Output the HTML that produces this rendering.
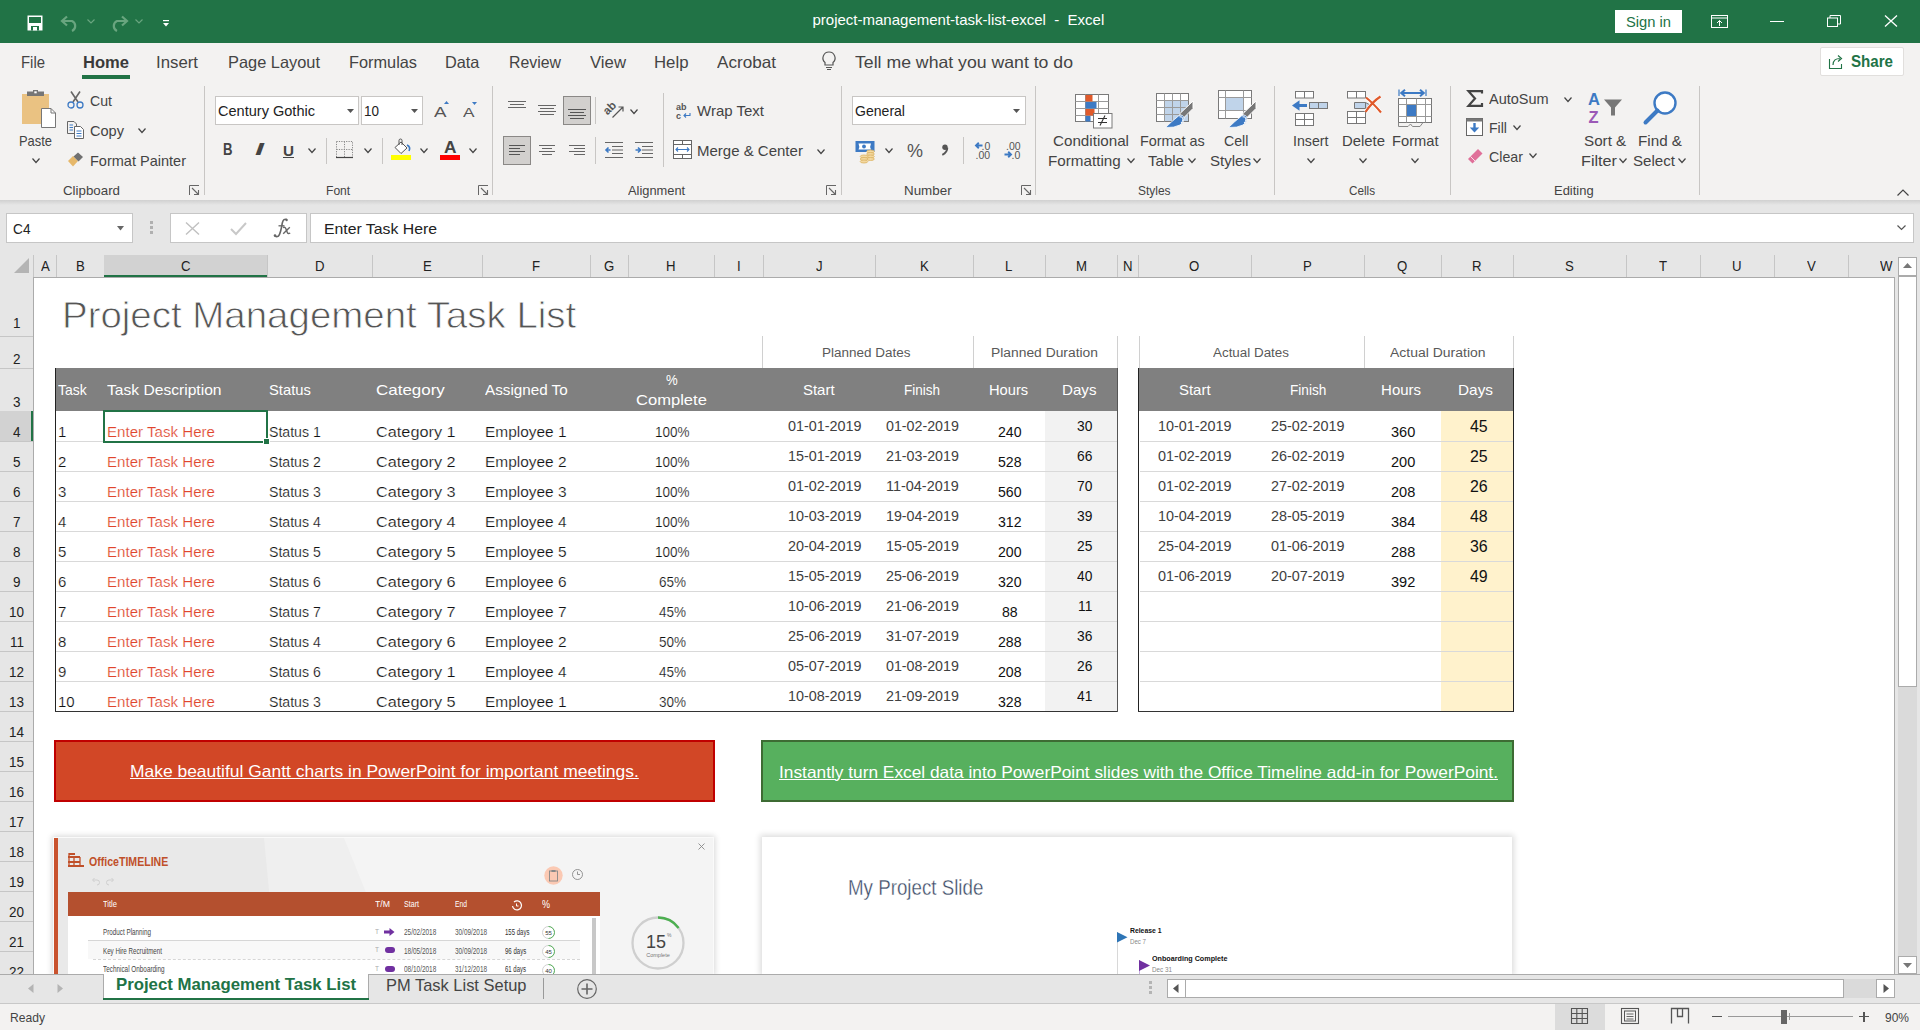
<!DOCTYPE html><html><head><meta charset="utf-8"><style>
html,body{margin:0;padding:0;}
body{width:1920px;height:1030px;position:relative;overflow:hidden;background:#fff;font-family:"Liberation Sans",sans-serif;}
.t{position:absolute;line-height:1;white-space:nowrap;transform-origin:0 0;}
svg{overflow:visible}
</style></head><body>
<div style="position:absolute;left:0px;top:0px;width:1920px;height:43px;background:#217346"></div>
<svg style="position:absolute;left:27px;top:15px;" width="16" height="16" viewBox="0 0 16 16"><path d="M0.5 0.5 H15.5 V15.5 H0.5 Z" fill="#fff"/><rect x="2" y="2" width="12" height="6" fill="#217346"/><rect x="4" y="11" width="8" height="4.5" fill="#217346"/><rect x="6" y="12" width="4" height="3.5" fill="#fff"/></svg>
<svg style="position:absolute;left:61px;top:16px;" width="19" height="15" viewBox="0 0 19 15"><path d="M2 5 H11 A5.5 5.5 0 0 1 11 15" fill="none" stroke="#69a57f" stroke-width="2.2"/><path d="M6 0.5 L1 5 L6 9.5" fill="none" stroke="#69a57f" stroke-width="2.2"/></svg>
<svg style="position:absolute;left:87px;top:19px;" width="8" height="5" viewBox="0 0 8 5"><path d="M0.5 0.5 L4.0 4 L7.5 0.5" fill="none" stroke="#69a57f" stroke-width="1.2"/></svg>
<svg style="position:absolute;left:109px;top:16px;" width="19" height="15" viewBox="0 0 19 15"><path d="M17 5 H8 A5.5 5.5 0 0 0 8 15" fill="none" stroke="#69a57f" stroke-width="2.2"/><path d="M13 0.5 L18 5 L13 9.5" fill="none" stroke="#69a57f" stroke-width="2.2"/></svg>
<svg style="position:absolute;left:135px;top:19px;" width="8" height="5" viewBox="0 0 8 5"><path d="M0.5 0.5 L4.0 4 L7.5 0.5" fill="none" stroke="#69a57f" stroke-width="1.2"/></svg>
<svg style="position:absolute;left:163px;top:20px;" width="6" height="7" viewBox="0 0 6 7"><rect x="0" y="0" width="6" height="1.2" fill="#fff"/><path d="M0 3 H6 L3 6.5 Z" fill="#fff"/></svg>
<div class="t" style="left:812.50px;top:12.30px;font-size:15px;color:#ffffff;white-space:pre;">project-management-task-list-excel  -  Excel</div>
<div style="position:absolute;left:1615px;top:10px;width:67px;height:23px;background:#fff;"></div>
<div class="t" style="left:1626.00px;top:14.30px;font-size:15px;color:#217346;transform:scaleX(0.9811);">Sign in</div>
<svg style="position:absolute;left:1711px;top:15px;" width="17" height="13" viewBox="0 0 17 13"><rect x="0.5" y="0.5" width="16" height="12" fill="none" stroke="#fff" stroke-width="1"/><path d="M0.5 3 H16.5" stroke="#fff"/><path d="M8.5 11 V5.5 M6 8 L8.5 5.5 L11 8" fill="none" stroke="#fff" stroke-width="1"/></svg>
<div style="position:absolute;left:1770px;top:21px;width:14px;height:1.2px;background:#fff"></div>
<svg style="position:absolute;left:1827px;top:15px;" width="14" height="12" viewBox="0 0 14 12"><rect x="0.5" y="3" width="10" height="8.5" fill="none" stroke="#fff"/><path d="M3 3 V0.5 H13.5 V9 H10.5" fill="none" stroke="#fff"/></svg>
<svg style="position:absolute;left:1884px;top:15px;" width="14" height="12" viewBox="0 0 14 12"><path d="M1 0.5 L13 11.5 M13 0.5 L1 11.5" stroke="#fff" stroke-width="1.3"/></svg>
<div style="position:absolute;left:0px;top:43px;width:1920px;height:157px;background:#f3f2f1"></div>
<div class="t" style="left:21.00px;top:54.33px;font-size:16.5px;color:#444;transform:scaleX(0.9027);">File</div>
<div class="t" style="left:156.00px;top:54.33px;font-size:16.5px;color:#444;transform:scaleX(1.0178);">Insert</div>
<div class="t" style="left:227.50px;top:54.33px;font-size:16.5px;color:#444;transform:scaleX(0.9929);">Page Layout</div>
<div class="t" style="left:348.50px;top:54.33px;font-size:16.5px;color:#444;transform:scaleX(0.9889);">Formulas</div>
<div class="t" style="left:445.40px;top:54.33px;font-size:16.5px;color:#444;transform:scaleX(0.9870);">Data</div>
<div class="t" style="left:509.00px;top:54.33px;font-size:16.5px;color:#444;transform:scaleX(0.9611);">Review</div>
<div class="t" style="left:590.00px;top:54.33px;font-size:16.5px;color:#444;transform:scaleX(1.0150);">View</div>
<div class="t" style="left:654.00px;top:54.33px;font-size:16.5px;color:#444;transform:scaleX(1.0166);">Help</div>
<div class="t" style="left:717.00px;top:54.33px;font-size:16.5px;color:#444;transform:scaleX(1.0375);">Acrobat</div>
<div class="t" style="left:82.50px;top:54.33px;font-size:16.5px;color:#3a3a3a;font-weight:bold;transform:scaleX(1.0034);">Home</div>
<div style="position:absolute;left:82px;top:75px;width:48px;height:3.5px;background:#217346"></div>
<svg style="position:absolute;left:821px;top:51px;" width="16" height="19" viewBox="0 0 16 19"><path d="M8 1 A6 6 0 0 0 4 11.5 V14 H12 V11.5 A6 6 0 0 0 8 1 Z" fill="none" stroke="#555" stroke-width="1.2"/><path d="M5 16.5 H11 M6 18.5 H10" stroke="#555" stroke-width="1.2"/></svg>
<div class="t" style="left:855.00px;top:54.33px;font-size:16.5px;color:#444;transform:scaleX(1.0707);">Tell me what you want to do</div>
<div style="position:absolute;left:1820px;top:47px;width:84px;height:29px;background:#fff;border:1px solid #e1dfdd;box-sizing:border-box;border-radius:2px"></div>
<svg style="position:absolute;left:1829px;top:54px;" width="15" height="15" viewBox="0 0 15 15"><path d="M0.5 5 V14.5 H12.5 V10" fill="none" stroke="#217346" stroke-width="1.1"/><path d="M4 11 C4 6 7 4.5 11 4.5 M9 1.5 L12.5 4.5 L9 7.5" fill="none" stroke="#217346" stroke-width="1.2"/></svg>
<div class="t" style="left:1850.50px;top:54.46px;font-size:16px;color:#217346;font-weight:bold;transform:scaleX(0.9445);">Share</div>
<div style="position:absolute;left:204px;top:86px;width:1px;height:109px;background:#c8c6c4"></div>
<div style="position:absolute;left:492px;top:86px;width:1px;height:109px;background:#c8c6c4"></div>
<div style="position:absolute;left:841px;top:86px;width:1px;height:109px;background:#c8c6c4"></div>
<div style="position:absolute;left:1035px;top:86px;width:1px;height:109px;background:#c8c6c4"></div>
<div style="position:absolute;left:1274px;top:86px;width:1px;height:109px;background:#c8c6c4"></div>
<div style="position:absolute;left:1450px;top:86px;width:1px;height:109px;background:#c8c6c4"></div>
<div style="position:absolute;left:1699px;top:86px;width:1px;height:109px;background:#c8c6c4"></div>
<div class="t" style="left:62.50px;top:183.60px;font-size:13px;color:#444;transform:scaleX(1.0243);">Clipboard</div>
<div class="t" style="left:325.80px;top:183.60px;font-size:13px;color:#444;transform:scaleX(0.9303);">Font</div>
<div class="t" style="left:627.80px;top:183.60px;font-size:13px;color:#444;transform:scaleX(0.9894);">Alignment</div>
<div class="t" style="left:904.00px;top:183.60px;font-size:13px;color:#444;transform:scaleX(1.0294);">Number</div>
<div class="t" style="left:1138.00px;top:183.60px;font-size:13px;color:#444;transform:scaleX(0.9180);">Styles</div>
<div class="t" style="left:1348.60px;top:183.60px;font-size:13px;color:#444;transform:scaleX(0.9033);">Cells</div>
<div class="t" style="left:1554.00px;top:183.60px;font-size:13px;color:#444;transform:scaleX(0.9962);">Editing</div>
<svg style="position:absolute;left:189px;top:185px;" width="11" height="11" viewBox="0 0 11 11"><path d="M0.5 10 V0.5 H10" fill="none" stroke="#666" stroke-width="1"/><path d="M3 3 L9.5 9.5 M5 9.5 H9.5 V5" fill="none" stroke="#666" stroke-width="1.1"/></svg>
<svg style="position:absolute;left:478px;top:185px;" width="11" height="11" viewBox="0 0 11 11"><path d="M0.5 10 V0.5 H10" fill="none" stroke="#666" stroke-width="1"/><path d="M3 3 L9.5 9.5 M5 9.5 H9.5 V5" fill="none" stroke="#666" stroke-width="1.1"/></svg>
<svg style="position:absolute;left:826px;top:185px;" width="11" height="11" viewBox="0 0 11 11"><path d="M0.5 10 V0.5 H10" fill="none" stroke="#666" stroke-width="1"/><path d="M3 3 L9.5 9.5 M5 9.5 H9.5 V5" fill="none" stroke="#666" stroke-width="1.1"/></svg>
<svg style="position:absolute;left:1021px;top:185px;" width="11" height="11" viewBox="0 0 11 11"><path d="M0.5 10 V0.5 H10" fill="none" stroke="#666" stroke-width="1"/><path d="M3 3 L9.5 9.5 M5 9.5 H9.5 V5" fill="none" stroke="#666" stroke-width="1.1"/></svg>
<svg style="position:absolute;left:22px;top:90px;" width="35" height="38" viewBox="0 0 35 38"><rect x="0" y="4" width="27" height="30" fill="#eac282"/><path d="M5 1.5 H22 V6 H5 Z" fill="#767676"/><rect x="11" y="0" width="5" height="4" fill="#767676"/><rect x="12.3" y="1.3" width="2.4" height="2" fill="#fff"/><path d="M19.5 18.5 H29 L33.5 23 V37.5 H19.5 Z" fill="#fff" stroke="#777" stroke-width="1"/><path d="M29 18.5 V23 H33.5" fill="none" stroke="#777" stroke-width="1"/></svg>
<div class="t" style="left:19.40px;top:132.90px;font-size:15px;color:#444;transform:scaleX(0.8603);">Paste</div>
<svg style="position:absolute;left:32px;top:157.5px;" width="8" height="5.5" viewBox="0 0 8 5.5"><path d="M0.5 0.5 L4.0 4.5 L7.5 0.5" fill="none" stroke="#444" stroke-width="1.2"/></svg>
<svg style="position:absolute;left:67px;top:91px;" width="17" height="18" viewBox="0 0 17 18"><path d="M4 0.5 L11 11 M13 0.5 L6 11" stroke="#666" stroke-width="1.6"/><circle cx="4" cy="14" r="3" fill="none" stroke="#3d7ac4" stroke-width="1.3"/><circle cx="13" cy="14" r="3" fill="none" stroke="#3d7ac4" stroke-width="1.3"/></svg>
<div class="t" style="left:90.00px;top:93.30px;font-size:15px;color:#444;transform:scaleX(0.9425);">Cut</div>
<svg style="position:absolute;left:67px;top:121px;" width="17" height="18" viewBox="0 0 17 18"><path d="M0.5 0.5 H7 L9.5 3 V7 M0.5 0.5 V12.5 H7" fill="none" stroke="#666" stroke-width="1"/><path d="M7.5 5.5 H13.5 L16.5 8.5 V17.5 H7.5 Z" fill="#fff" stroke="#666" stroke-width="1"/><path d="M2.5 4 H6 M2.5 6.5 H6 M2.5 9 H6 M9.5 10 H14.5 M9.5 12.5 H14.5 M9.5 15 H14.5" stroke="#3d7ac4" stroke-width="1"/></svg>
<div class="t" style="left:90.00px;top:122.90px;font-size:15px;color:#444;transform:scaleX(0.9709);">Copy</div>
<svg style="position:absolute;left:137.5px;top:128px;" width="8" height="5.5" viewBox="0 0 8 5.5"><path d="M0.5 0.5 L4.0 4.5 L7.5 0.5" fill="none" stroke="#444" stroke-width="1.2"/></svg>
<svg style="position:absolute;left:67px;top:152px;" width="17" height="15" viewBox="0 0 17 15"><path d="M1 9 L6 4 L11 9 L6 14.5 Z" fill="#e6b86a"/><path d="M6.5 4.5 L11 0.5 L16 5 L11.5 9.5 Z" fill="#707070"/></svg>
<div class="t" style="left:90.00px;top:153.30px;font-size:15px;color:#444;transform:scaleX(0.9677);">Format Painter</div>
<div style="position:absolute;left:215px;top:96px;width:144px;height:29px;background:#fff;border:1px solid #c8c6c4;box-sizing:border-box"></div>
<div class="t" style="left:218.00px;top:103.30px;font-size:15px;color:#222;transform:scaleX(0.9696);">Century Gothic</div>
<svg style="position:absolute;left:347px;top:109px;" width="7" height="4" viewBox="0 0 7 4"><path d="M0 0 H7 L3.5 4 Z" fill="#555"/></svg>
<div style="position:absolute;left:361px;top:96px;width:62px;height:29px;background:#fff;border:1px solid #c8c6c4;box-sizing:border-box"></div>
<div class="t" style="left:364.00px;top:103.30px;font-size:15px;color:#222;transform:scaleX(0.8990);">10</div>
<svg style="position:absolute;left:411px;top:109px;" width="7" height="4" viewBox="0 0 7 4"><path d="M0 0 H7 L3.5 4 Z" fill="#555"/></svg>
<div class="t" style="left:434.00px;top:104.30px;font-size:15px;color:#555;transform:scaleX(1.2493);">A</div>
<svg style="position:absolute;left:444px;top:101px;" width="5" height="3" viewBox="0 0 5 3"><path d="M0 3 L2.5 0 L5 3 Z" fill="#3d7ac4"/></svg>
<div class="t" style="left:463.00px;top:105.57px;font-size:13.5px;color:#555;transform:scaleX(1.2771);">A</div>
<svg style="position:absolute;left:472px;top:102px;" width="5" height="3" viewBox="0 0 5 3"><path d="M0 0 L2.5 3 L5 0 Z" fill="#3d7ac4"/></svg>
<div class="t" style="left:223.40px;top:142.46px;font-size:16px;color:#444;font-weight:bold;transform:scaleX(0.8222);">B</div>
<div class="t" style="left:255.00px;top:142.46px;font-size:16px;color:#444;font-weight:bold;transform:scaleX(2.0247);font-style:italic;">I</div>
<div class="t" style="left:283.00px;top:143.30px;font-size:15px;color:#444;font-weight:bold;transform:scaleX(1.0154);">U</div>
<div style="position:absolute;left:283px;top:157px;width:11px;height:1.2px;background:#444"></div>
<svg style="position:absolute;left:307.8px;top:148px;" width="8" height="5.5" viewBox="0 0 8 5.5"><path d="M0.5 0.5 L4.0 4.5 L7.5 0.5" fill="none" stroke="#444" stroke-width="1.2"/></svg>
<div style="position:absolute;left:326px;top:138px;width:1px;height:26px;background:#c8c6c4"></div>
<svg style="position:absolute;left:336px;top:141px;" width="17" height="17" viewBox="0 0 17 17"><path d="M0.5 0.5 H16.5 V16.5 M0.5 0.5 V16.5 M8.5 0.5 V16.5 M0.5 8.5 H16.5" fill="none" stroke="#888" stroke-width="1" stroke-dasharray="1.2 1.2"/><path d="M0 16.5 H17" stroke="#444" stroke-width="1.2"/></svg>
<svg style="position:absolute;left:364px;top:148px;" width="8" height="5.5" viewBox="0 0 8 5.5"><path d="M0.5 0.5 L4.0 4.5 L7.5 0.5" fill="none" stroke="#444" stroke-width="1.2"/></svg>
<div style="position:absolute;left:382px;top:138px;width:1px;height:26px;background:#c8c6c4"></div>
<svg style="position:absolute;left:391px;top:140px;" width="21" height="20" viewBox="0 0 21 20"><path d="M4 7.5 L10 2 L16 8 L10 13.5 Z" fill="#fff" stroke="#555" stroke-width="1"/><path d="M8 5 V0.5 A1.5 1.5 0 0 1 11 0.5 V5" fill="none" stroke="#555" stroke-width="1"/><path d="M16 5 Q20 7 18 11" fill="none" stroke="#3d7ac4" stroke-width="1.6"/><rect x="0" y="15" width="20" height="5" fill="#ffff00"/></svg>
<svg style="position:absolute;left:420px;top:148px;" width="8" height="5.5" viewBox="0 0 8 5.5"><path d="M0.5 0.5 L4.0 4.5 L7.5 0.5" fill="none" stroke="#444" stroke-width="1.2"/></svg>
<div class="t" style="left:443.50px;top:139.11px;font-size:17px;color:#444;font-weight:bold;transform:scaleX(1.0181);">A</div>
<div style="position:absolute;left:440px;top:155px;width:20px;height:5px;background:#ff0000"></div>
<svg style="position:absolute;left:468.75px;top:148px;" width="8" height="5.5" viewBox="0 0 8 5.5"><path d="M0.5 0.5 L4.0 4.5 L7.5 0.5" fill="none" stroke="#444" stroke-width="1.2"/></svg>
<svg style="position:absolute;left:508px;top:100px;" width="18" height="9" viewBox="0 0 18 9"><path d="M0 1.5 H18 M2 4.5 H16 M0 7.5 H18" stroke="#666" stroke-width="1"/></svg>
<svg style="position:absolute;left:538px;top:104px;" width="18" height="12" viewBox="0 0 18 12"><path d="M0 1.5 H18 M2 4.5 H16 M0 7.5 H18 M2 10.5 H16" stroke="#666" stroke-width="1"/></svg>
<div style="position:absolute;left:563px;top:96px;width:28px;height:29px;background:#d2d0ce;border:1px solid #8a8886;box-sizing:border-box"></div>
<svg style="position:absolute;left:568px;top:108px;" width="18" height="12" viewBox="0 0 18 12"><path d="M0 1.5 H18 M2 4.5 H16 M0 7.5 H18 M2 10.5 H16" stroke="#555" stroke-width="1"/></svg>
<div style="position:absolute;left:595px;top:97px;width:1px;height:27px;background:#c8c6c4"></div>
<svg style="position:absolute;left:604px;top:100px;" width="20" height="19" viewBox="0 0 20 19"><text x="0" y="0" font-size="11.5" fill="#555" font-weight="bold" font-family="Liberation Sans" transform="translate(3.5 15.5) rotate(-45)">ab</text><path d="M8.5 17.5 L18.5 7.5 M14.5 7 H19 V11.5" fill="none" stroke="#555" stroke-width="1.2"/></svg>
<svg style="position:absolute;left:629.7px;top:109px;" width="8" height="5.5" viewBox="0 0 8 5.5"><path d="M0.5 0.5 L4.0 4.5 L7.5 0.5" fill="none" stroke="#444" stroke-width="1.2"/></svg>
<div style="position:absolute;left:663px;top:93px;width:1px;height:74px;background:#c8c6c4"></div>
<svg style="position:absolute;left:676px;top:102px;" width="16" height="17" viewBox="0 0 16 17"><text x="0" y="7.5" font-size="9" fill="#555" font-family="Liberation Sans" font-weight="bold">ab</text><text x="0" y="16.5" font-size="9" fill="#555" font-family="Liberation Sans" font-weight="bold">c</text><path d="M14 11 V13.5 H8 M10 11.5 L8 13.5 L10 15.5" fill="none" stroke="#3d7ac4" stroke-width="1.1"/></svg>
<div class="t" style="left:697.00px;top:103.30px;font-size:15px;color:#444;">Wrap Text</div>
<div style="position:absolute;left:503px;top:136px;width:28px;height:29px;background:#d2d0ce;border:1px solid #8a8886;box-sizing:border-box"></div>
<svg style="position:absolute;left:509px;top:145px;" width="16" height="11" viewBox="0 0 16 11"><path d="M0 0.5 H16 M0 3.5 H11 M0 6.5 H16 M0 9.5 H11" stroke="#555" stroke-width="1"/></svg>
<svg style="position:absolute;left:539px;top:145px;" width="16" height="11" viewBox="0 0 16 11"><path d="M0 0.5 H16 M3 3.5 H13 M0 6.5 H16 M3 9.5 H13" stroke="#666" stroke-width="1"/></svg>
<svg style="position:absolute;left:569px;top:145px;" width="16" height="11" viewBox="0 0 16 11"><path d="M0 0.5 H16 M5 3.5 H16 M0 6.5 H16 M5 9.5 H16" stroke="#666" stroke-width="1"/></svg>
<div style="position:absolute;left:595px;top:137px;width:1px;height:27px;background:#c8c6c4"></div>
<svg style="position:absolute;left:605px;top:142px;" width="18" height="16" viewBox="0 0 18 16"><path d="M0 0.5 H18 M7 4.5 H18 M7 8 H18 M7 11.5 H18 M0 15.5 H18" stroke="#666" stroke-width="1"/><path d="M5.5 8 H1 M3.5 5.5 L1 8 L3.5 10.5" fill="none" stroke="#3d7ac4" stroke-width="1.6"/></svg>
<svg style="position:absolute;left:635px;top:142px;" width="18" height="16" viewBox="0 0 18 16"><path d="M0 0.5 H18 M7 4.5 H18 M7 8 H18 M7 11.5 H18 M0 15.5 H18" stroke="#666" stroke-width="1"/><path d="M0.5 8 H5 M3 5.5 L5.5 8 L3 10.5" fill="none" stroke="#3d7ac4" stroke-width="1.6"/></svg>
<svg style="position:absolute;left:673px;top:140px;" width="19" height="19" viewBox="0 0 19 19"><rect x="0.5" y="0.5" width="18" height="18" fill="#fff" stroke="#666"/><path d="M0.5 4.5 H18.5 M0.5 14.5 H18.5 M9.5 0.5 V4.5 M9.5 14.5 V18.5" stroke="#666"/><path d="M3 9.5 H16 M5 7.5 L3 9.5 L5 11.5 M14 7.5 L16 9.5 L14 11.5" fill="none" stroke="#3d7ac4" stroke-width="1.1"/></svg>
<div class="t" style="left:697.00px;top:143.30px;font-size:15px;color:#444;">Merge &amp; Center</div>
<svg style="position:absolute;left:817px;top:148.5px;" width="8" height="5.5" viewBox="0 0 8 5.5"><path d="M0.5 0.5 L4.0 4.5 L7.5 0.5" fill="none" stroke="#444" stroke-width="1.2"/></svg>
<div style="position:absolute;left:852px;top:96px;width:174px;height:29px;background:#fff;border:1px solid #c8c6c4;box-sizing:border-box"></div>
<div class="t" style="left:855.00px;top:103.30px;font-size:15px;color:#222;transform:scaleX(0.9369);">General</div>
<svg style="position:absolute;left:1013px;top:109px;" width="7" height="4" viewBox="0 0 7 4"><path d="M0 0 H7 L3.5 4 Z" fill="#555"/></svg>
<svg style="position:absolute;left:855px;top:141px;" width="21" height="22" viewBox="0 0 21 22"><rect x="0.5" y="0" width="19" height="11" fill="#3d7ac4"/><path d="M3.5 2.5 H16 Q14.5 5.5 16 8.5 H3.5 Q5 5.5 3.5 2.5 Z" fill="#fff"/><circle cx="9" cy="5.5" r="1.9" fill="#3d7ac4"/><ellipse cx="15.5" cy="10.5" rx="3.8" ry="1.5" fill="#f3d8a0" stroke="#dcb463" stroke-width="0.8"/><ellipse cx="15.5" cy="13" rx="3.8" ry="1.5" fill="#f3d8a0" stroke="#dcb463" stroke-width="0.8"/><ellipse cx="15.5" cy="15.5" rx="3.8" ry="1.5" fill="#f3d8a0" stroke="#dcb463" stroke-width="0.8"/><ellipse cx="15.5" cy="18" rx="3.8" ry="1.5" fill="#f3d8a0" stroke="#dcb463" stroke-width="0.8"/><ellipse cx="9" cy="15.5" rx="3.8" ry="1.5" fill="#f3d8a0" stroke="#dcb463" stroke-width="0.8"/><ellipse cx="9" cy="18" rx="3.8" ry="1.5" fill="#f3d8a0" stroke="#dcb463" stroke-width="0.8"/><ellipse cx="9" cy="20.5" rx="3.8" ry="1.5" fill="#f3d8a0" stroke="#dcb463" stroke-width="0.8"/></svg>
<svg style="position:absolute;left:884.7px;top:148px;" width="8" height="5.5" viewBox="0 0 8 5.5"><path d="M0.5 0.5 L4.0 4.5 L7.5 0.5" fill="none" stroke="#444" stroke-width="1.2"/></svg>
<div class="t" style="left:906.50px;top:141.42px;font-size:19px;color:#555;transform:scaleX(0.9471);">%</div>
<svg style="position:absolute;left:940px;top:144px;" width="9" height="12" viewBox="0 0 9 12"><circle cx="5" cy="3.3" r="2.7" fill="#555"/><path d="M7.3 3.8 Q7.3 8.5 2.3 10.8" fill="none" stroke="#555" stroke-width="1.9"/></svg>
<div style="position:absolute;left:963px;top:137px;width:1px;height:27px;background:#c8c6c4"></div>
<svg style="position:absolute;left:974px;top:141px;" width="17" height="18" viewBox="0 0 17 18"><path d="M8.5 4.5 H2 M4.8 1.8 L2 4.5 L4.8 7.2" fill="none" stroke="#3d7ac4" stroke-width="1.9"/><text x="7.5" y="9" font-size="10.5" fill="#555" font-family="Liberation Sans">.0</text><text x="1.5" y="17.5" font-size="10.5" fill="#555" font-family="Liberation Sans">.00</text></svg>
<svg style="position:absolute;left:1004px;top:141px;" width="17" height="18" viewBox="0 0 17 18"><text x="2" y="9" font-size="10.5" fill="#555" font-family="Liberation Sans">.00</text><path d="M0.5 13.5 H7 M4.2 10.8 L7 13.5 L4.2 16.2" fill="none" stroke="#3d7ac4" stroke-width="1.9"/><text x="7.5" y="17.5" font-size="10.5" fill="#555" font-family="Liberation Sans">.0</text></svg>
<svg style="position:absolute;left:1075px;top:94px;" width="38" height="35" viewBox="0 0 38 35"><rect x="0.5" y="0.5" width="33" height="27" fill="#fff" stroke="#7a7a7a"/><path d="M0.5 7.5 H33.5 M0.5 14.5 H33.5 M0.5 21.5 H33.5 M10.5 0.5 V27.5 M23.5 0.5 V27.5" stroke="#9a9a9a"/><rect x="10.5" y="1" width="7" height="6.5" fill="#e05a2b"/><rect x="10.5" y="8" width="11" height="6.5" fill="#3d7ac4"/><rect x="10.5" y="15" width="9" height="6.5" fill="#e05a2b"/><rect x="10.5" y="22" width="5" height="5.5" fill="#3d7ac4"/><rect x="18.5" y="19.5" width="18.5" height="14.5" fill="#fff" stroke="#7a7a7a"/><path d="M23 24.5 H32 M23 28.5 H32 M30 21.5 L25 31.5" stroke="#333" stroke-width="1.1"/></svg>
<div class="t" style="left:1053.00px;top:132.90px;font-size:15px;color:#444;transform:scaleX(1.0126);">Conditional</div>
<div class="t" style="left:1048.00px;top:152.50px;font-size:15px;color:#444;transform:scaleX(1.0141);">Formatting</div>
<svg style="position:absolute;left:1126.5px;top:157.5px;" width="8" height="5.5" viewBox="0 0 8 5.5"><path d="M0.5 0.5 L4.0 4.5 L7.5 0.5" fill="none" stroke="#444" stroke-width="1.2"/></svg>
<svg style="position:absolute;left:1156px;top:93px;" width="38" height="36" viewBox="0 0 38 36"><rect x="0.5" y="0.5" width="32" height="28" fill="#fff" stroke="#7a7a7a"/><rect x="9" y="8" width="23" height="20" fill="#c0d4ea"/><path d="M8.5 0.5 V28.5 M16.5 0.5 V28.5 M24.5 0.5 V28.5 M0.5 7.5 H32.5 M0.5 14.5 H32.5 M0.5 21.5 H32.5" stroke="#9a9a9a"/><g transform="translate(9 7)"><path d="M28 1 V8.5 L18.5 18 L14.5 14 Z" fill="#777" stroke="#fff" stroke-width="1"/><path d="M14 15.5 Q18 14 19 18 Q19.5 22 15 25 Q9 28 0.5 27.5 Q6 22 14 15.5 Z" fill="#3d7ac4" stroke="#fff" stroke-width="0.8"/><path d="M14.5 16.8 Q17.5 16 18 19 Q18 21.5 16 23" fill="none" stroke="#fff" stroke-width="1"/></g></svg>
<div class="t" style="left:1140.00px;top:132.90px;font-size:15px;color:#444;transform:scaleX(0.9598);">Format as</div>
<div class="t" style="left:1148.00px;top:152.50px;font-size:15px;color:#444;transform:scaleX(1.0039);">Table</div>
<svg style="position:absolute;left:1188px;top:157.5px;" width="8" height="5.5" viewBox="0 0 8 5.5"><path d="M0.5 0.5 L4.0 4.5 L7.5 0.5" fill="none" stroke="#444" stroke-width="1.2"/></svg>
<svg style="position:absolute;left:1218px;top:90px;" width="38" height="38" viewBox="0 0 38 38"><rect x="0.5" y="0.5" width="33" height="28" fill="#fff" stroke="#7a7a7a"/><rect x="8" y="8" width="17.5" height="12.5" fill="#c0d4ea"/><path d="M7.5 0.5 V28.5 M25.5 0.5 V28.5 M0.5 7.5 H33.5 M0.5 20.5 H33.5" stroke="#9a9a9a"/><g transform="translate(10 10)"><path d="M28 1 V8.5 L18.5 18 L14.5 14 Z" fill="#777" stroke="#fff" stroke-width="1"/><path d="M14 15.5 Q18 14 19 18 Q19.5 22 15 25 Q9 28 0.5 27.5 Q6 22 14 15.5 Z" fill="#3d7ac4" stroke="#fff" stroke-width="0.8"/><path d="M14.5 16.8 Q17.5 16 18 19 Q18 21.5 16 23" fill="none" stroke="#fff" stroke-width="1"/></g></svg>
<div class="t" style="left:1224.00px;top:132.90px;font-size:15px;color:#444;transform:scaleX(0.9442);">Cell</div>
<div class="t" style="left:1210.00px;top:152.50px;font-size:15px;color:#444;transform:scaleX(1.0037);">Styles</div>
<svg style="position:absolute;left:1253px;top:157.5px;" width="8" height="5.5" viewBox="0 0 8 5.5"><path d="M0.5 0.5 L4.0 4.5 L7.5 0.5" fill="none" stroke="#444" stroke-width="1.2"/></svg>
<svg style="position:absolute;left:1291px;top:90px;" width="38" height="37" viewBox="0 0 38 37"><rect x="4.5" y="1.5" width="18" height="6.5" fill="#fff" stroke="#777"/><path d="M13.5 1.5 V8" stroke="#777"/><rect x="18.5" y="12.5" width="18" height="6" fill="#c0d4ea" stroke="#777"/><path d="M27.5 12.5 V18.5" stroke="#777"/><path d="M16 15.5 H5" stroke="#3d7ac4" stroke-width="3"/><path d="M8.5 10.2 L1 15.5 L8.5 20.8 Z" fill="#3d7ac4"/><rect x="4.5" y="23.5" width="18" height="12" fill="#fff" stroke="#777"/><path d="M4.5 29.5 H22.5 M13.5 23.5 V35.5" stroke="#777"/></svg>
<div class="t" style="left:1293.00px;top:132.90px;font-size:15px;color:#444;transform:scaleX(0.9436);">Insert</div>
<svg style="position:absolute;left:1306.7px;top:157.5px;" width="8" height="5.5" viewBox="0 0 8 5.5"><path d="M0.5 0.5 L4.0 4.5 L7.5 0.5" fill="none" stroke="#444" stroke-width="1.2"/></svg>
<svg style="position:absolute;left:1347px;top:90px;" width="36" height="36" viewBox="0 0 36 36"><rect x="0.5" y="1.5" width="18" height="6.5" fill="#fff" stroke="#777"/><path d="M9.5 1.5 V8" stroke="#777"/><path d="M7.5 12.5 H18.5 L24 15.5 L18.5 18.5 H7.5 Z" fill="#c0d4ea" stroke="#777"/><path d="M18.5 12.5 V18.5" stroke="#777"/><rect x="0.5" y="21.5" width="18" height="12" fill="#fff" stroke="#777"/><path d="M0.5 27.5 H18.5 M9.5 21.5 V33.5" stroke="#777"/><path d="M19 7.5 Q26 13 34 22.5 M33.5 6.5 Q25 12 18.5 22" fill="none" stroke="#fff" stroke-width="3.5"/><path d="M19 7.5 Q26 13 34 22.5 M33.5 6.5 Q25 12 18.5 22" fill="none" stroke="#e05a2b" stroke-width="2.2"/></svg>
<div class="t" style="left:1341.50px;top:132.90px;font-size:15px;color:#444;transform:scaleX(0.9917);">Delete</div>
<svg style="position:absolute;left:1359px;top:157.5px;" width="8" height="5.5" viewBox="0 0 8 5.5"><path d="M0.5 0.5 L4.0 4.5 L7.5 0.5" fill="none" stroke="#444" stroke-width="1.2"/></svg>
<svg style="position:absolute;left:1398px;top:89px;" width="35" height="38" viewBox="0 0 35 38"><path d="M1 0.5 V7 M28 0.5 V7" stroke="#3d7ac4" stroke-width="1.2"/><path d="M4 4 H25" stroke="#3d7ac4" stroke-width="2"/><path d="M7 0.8 L3.2 4 L7 7.2 M22 0.8 L25.8 4 L22 7.2" fill="none" stroke="#3d7ac4" stroke-width="2"/><rect x="0.5" y="9.5" width="33" height="24" fill="#fff" stroke="#777"/><path d="M0.5 15.5 H33.5 M0.5 27.5 H33.5 M8.5 9.5 V33.5 M18.5 9.5 V33.5 M27.5 9.5 V33.5" stroke="#999"/><rect x="9" y="16" width="9" height="11" fill="#3d7ac4"/><path d="M0.5 33.5 V37.5 H10 L12.5 35 L14.5 37.5 H22 L25 33.5" fill="none" stroke="#888"/></svg>
<div class="t" style="left:1391.50px;top:132.90px;font-size:15px;color:#444;transform:scaleX(0.9788);">Format</div>
<svg style="position:absolute;left:1411px;top:157.5px;" width="8" height="5.5" viewBox="0 0 8 5.5"><path d="M0.5 0.5 L4.0 4.5 L7.5 0.5" fill="none" stroke="#444" stroke-width="1.2"/></svg>
<svg style="position:absolute;left:1467px;top:90px;" width="16" height="17" viewBox="0 0 16 17"><path d="M15 3.5 V1.2 H1.5 L8 8.5 L1.5 15.8 H15 V13" fill="none" stroke="#444" stroke-width="2.2" stroke-linejoin="miter"/></svg>
<div class="t" style="left:1489.30px;top:90.90px;font-size:15px;color:#444;transform:scaleX(0.9676);">AutoSum</div>
<svg style="position:absolute;left:1564px;top:96.5px;" width="8" height="5.5" viewBox="0 0 8 5.5"><path d="M0.5 0.5 L4.0 4.5 L7.5 0.5" fill="none" stroke="#444" stroke-width="1.2"/></svg>
<svg style="position:absolute;left:1466px;top:118px;" width="17" height="18" viewBox="0 0 17 18"><rect x="0.5" y="0.5" width="16" height="17" fill="#fff" stroke="#666"/><rect x="0.5" y="0.5" width="16" height="3" fill="#777"/><path d="M8.5 5 V12" stroke="#3d7ac4" stroke-width="2.4"/><path d="M3.8 9.5 L8.5 14.5 L13.2 9.5 Z" fill="#3d7ac4"/></svg>
<div class="t" style="left:1489.30px;top:120.00px;font-size:15px;color:#444;transform:scaleX(0.9394);">Fill</div>
<svg style="position:absolute;left:1513px;top:124.5px;" width="8" height="5.5" viewBox="0 0 8 5.5"><path d="M0.5 0.5 L4.0 4.5 L7.5 0.5" fill="none" stroke="#444" stroke-width="1.2"/></svg>
<svg style="position:absolute;left:1467px;top:148px;" width="16" height="16" viewBox="0 0 16 16"><path d="M1 11 L11 1 L15.5 5.5 L5.5 15.5 Z" fill="#e0709a"/><path d="M3.5 8.5 L8 13" stroke="#fff" stroke-width="0.8"/></svg>
<div class="t" style="left:1489.30px;top:148.70px;font-size:15px;color:#444;transform:scaleX(0.9485);">Clear</div>
<svg style="position:absolute;left:1528.5px;top:153px;" width="8" height="5.5" viewBox="0 0 8 5.5"><path d="M0.5 0.5 L4.0 4.5 L7.5 0.5" fill="none" stroke="#444" stroke-width="1.2"/></svg>
<svg style="position:absolute;left:1588px;top:92px;" width="36" height="31" viewBox="0 0 36 31"><text x="0" y="12.5" font-size="16.5" fill="#3d7ac4" font-weight="bold" font-family="Liberation Sans">A</text><text x="0.5" y="30.5" font-size="16.5" fill="#9b59b6" font-weight="bold" font-family="Liberation Sans">Z</text><path d="M16 7.5 H34 L27 15.5 V23.5 H23 V15.5 Z" fill="#777"/></svg>
<div class="t" style="left:1583.50px;top:132.90px;font-size:15px;color:#444;transform:scaleX(1.0124);">Sort &amp;</div>
<div class="t" style="left:1581.00px;top:152.50px;font-size:15px;color:#444;transform:scaleX(1.0800);">Filter</div>
<svg style="position:absolute;left:1619px;top:157.5px;" width="8" height="5.5" viewBox="0 0 8 5.5"><path d="M0.5 0.5 L4.0 4.5 L7.5 0.5" fill="none" stroke="#444" stroke-width="1.2"/></svg>
<svg style="position:absolute;left:1643px;top:91px;" width="35" height="35" viewBox="0 0 35 35"><circle cx="22" cy="12" r="10.5" fill="#fff" stroke="#3d7ac4" stroke-width="2.4"/><path d="M14.5 19.5 L2.5 31.5" stroke="#3d7ac4" stroke-width="4" stroke-linecap="round"/></svg>
<div class="t" style="left:1638.00px;top:132.90px;font-size:15px;color:#444;transform:scaleX(1.0149);">Find &amp;</div>
<div class="t" style="left:1633.00px;top:152.50px;font-size:15px;color:#444;transform:scaleX(1.0074);">Select</div>
<svg style="position:absolute;left:1678px;top:157.5px;" width="8" height="5.5" viewBox="0 0 8 5.5"><path d="M0.5 0.5 L4.0 4.5 L7.5 0.5" fill="none" stroke="#444" stroke-width="1.2"/></svg>
<svg style="position:absolute;left:1897px;top:189px;" width="12" height="7" viewBox="0 0 12 7"><path d="M0.5 6.5 L6 1 L11.5 6.5" fill="none" stroke="#444" stroke-width="1.2"/></svg>
<div style="position:absolute;left:0px;top:200px;width:1920px;height:55px;background:#e6e6e6"></div>
<div style="position:absolute;left:0px;top:200px;width:1920px;height:5px;background:linear-gradient(#d0d0d0,#e6e6e6)"></div>
<div style="position:absolute;left:6px;top:213px;width:127px;height:30px;background:#fff;border:1px solid #c6c6c6;box-sizing:border-box"></div>
<div class="t" style="left:13.00px;top:220.80px;font-size:15px;color:#222;transform:scaleX(0.9126);">C4</div>
<svg style="position:absolute;left:117px;top:225.5px;" width="7" height="4.5" viewBox="0 0 7 4.5"><path d="M0 0 H7 L3.5 4.5 Z" fill="#666"/></svg>
<div style="position:absolute;left:150px;top:221px;width:3px;height:3px;background:#b0b0b0"></div>
<div style="position:absolute;left:150px;top:226px;width:3px;height:3px;background:#b0b0b0"></div>
<div style="position:absolute;left:150px;top:231px;width:3px;height:3px;background:#b0b0b0"></div>
<div style="position:absolute;left:170px;top:213px;width:137px;height:30px;background:#fff;border:1px solid #c6c6c6;box-sizing:border-box"></div>
<svg style="position:absolute;left:185px;top:222px;" width="15" height="13" viewBox="0 0 15 13"><path d="M1 0.5 L14 12.5 M14 0.5 L1 12.5" stroke="#c0c0c0" stroke-width="1.4"/></svg>
<svg style="position:absolute;left:230px;top:222px;" width="17" height="13" viewBox="0 0 17 13"><path d="M1 7 L6 12 L16 1" fill="none" stroke="#c8c8c8" stroke-width="2"/></svg>
<svg style="position:absolute;left:272px;top:216px;" width="22" height="24" viewBox="0 0 22 24"><path d="M2.5 19.5 Q4 21.5 6.5 20 Q8.5 18 10.3 7 Q11.5 2.2 14.8 3.5" fill="none" stroke="#666" stroke-width="1.6"/><circle cx="14.6" cy="4" r="1.2" fill="#666"/><circle cx="3" cy="19.5" r="1.3" fill="#666"/><path d="M6.5 9.8 H12.5" stroke="#666" stroke-width="1.3"/><path d="M11 11.5 Q13 10.5 14 13 L15.3 16.5 Q16 18.3 18.2 17" fill="none" stroke="#666" stroke-width="1.4"/><path d="M17.8 11.3 L11.2 17.8" stroke="#666" stroke-width="1.4"/></svg>
<div style="position:absolute;left:310px;top:213px;width:1604px;height:30px;background:#fff;border:1px solid #c6c6c6;box-sizing:border-box"></div>
<div class="t" style="left:324.00px;top:220.80px;font-size:15px;color:#222;transform:scaleX(1.0534);">Enter Task Here</div>
<svg style="position:absolute;left:1897px;top:225px;" width="9" height="5" viewBox="0 0 9 5"><path d="M0.5 0.5 L4.5 4.5 L8.5 0.5" fill="none" stroke="#555" stroke-width="1.2"/></svg>
<div style="position:absolute;left:0px;top:255px;width:1897px;height:22px;background:#e6e6e6"></div>
<div style="position:absolute;left:0px;top:277px;width:1895px;height:1px;background:#ababab"></div>
<svg style="position:absolute;left:14px;top:258px;" width="16" height="16" viewBox="0 0 16 16"><path d="M15 0 V15 H0 Z" fill="#b4b4b4"/></svg>
<div style="position:absolute;left:33px;top:255px;width:1px;height:22px;background:#c6c6c6"></div>
<div style="position:absolute;left:56px;top:255px;width:1px;height:22px;background:#c6c6c6"></div>
<div class="t" style="left:40.60px;top:258.30px;font-size:15px;color:#222;transform:scaleX(0.8800);">A</div>
<div style="position:absolute;left:104px;top:255px;width:1px;height:22px;background:#c6c6c6"></div>
<div class="t" style="left:75.60px;top:258.30px;font-size:15px;color:#222;transform:scaleX(0.8800);">B</div>
<div style="position:absolute;left:104px;top:255px;width:163px;height:22px;background:#d2d2d2"></div>
<div style="position:absolute;left:104px;top:275px;width:163px;height:2px;background:#217346"></div>
<div style="position:absolute;left:267px;top:255px;width:1px;height:22px;background:#c6c6c6"></div>
<div class="t" style="left:180.73px;top:258.30px;font-size:15px;color:#222;transform:scaleX(0.8800);">C</div>
<div style="position:absolute;left:372px;top:255px;width:1px;height:22px;background:#c6c6c6"></div>
<div class="t" style="left:314.73px;top:258.30px;font-size:15px;color:#222;transform:scaleX(0.8800);">D</div>
<div style="position:absolute;left:482px;top:255px;width:1px;height:22px;background:#c6c6c6"></div>
<div class="t" style="left:422.60px;top:258.30px;font-size:15px;color:#222;transform:scaleX(0.8800);">E</div>
<div style="position:absolute;left:590px;top:255px;width:1px;height:22px;background:#c6c6c6"></div>
<div class="t" style="left:531.97px;top:258.30px;font-size:15px;color:#222;transform:scaleX(0.8800);">F</div>
<div style="position:absolute;left:628px;top:255px;width:1px;height:22px;background:#c6c6c6"></div>
<div class="t" style="left:603.87px;top:258.30px;font-size:15px;color:#222;transform:scaleX(0.8800);">G</div>
<div style="position:absolute;left:714px;top:255px;width:1px;height:22px;background:#c6c6c6"></div>
<div class="t" style="left:666.23px;top:258.30px;font-size:15px;color:#222;transform:scaleX(0.8800);">H</div>
<div style="position:absolute;left:763px;top:255px;width:1px;height:22px;background:#c6c6c6"></div>
<div class="t" style="left:736.67px;top:258.30px;font-size:15px;color:#222;transform:scaleX(0.8800);">I</div>
<div style="position:absolute;left:875px;top:255px;width:1px;height:22px;background:#c6c6c6"></div>
<div class="t" style="left:815.70px;top:258.30px;font-size:15px;color:#222;transform:scaleX(0.8800);">J</div>
<div style="position:absolute;left:973px;top:255px;width:1px;height:22px;background:#c6c6c6"></div>
<div class="t" style="left:919.60px;top:258.30px;font-size:15px;color:#222;transform:scaleX(0.8800);">K</div>
<div style="position:absolute;left:1045px;top:255px;width:1px;height:22px;background:#c6c6c6"></div>
<div class="t" style="left:1005.33px;top:258.30px;font-size:15px;color:#222;transform:scaleX(0.8800);">L</div>
<div style="position:absolute;left:1117px;top:255px;width:1px;height:22px;background:#c6c6c6"></div>
<div class="t" style="left:1075.50px;top:258.30px;font-size:15px;color:#222;transform:scaleX(0.8800);">M</div>
<div style="position:absolute;left:1138px;top:255px;width:1px;height:22px;background:#c6c6c6"></div>
<div class="t" style="left:1122.73px;top:258.30px;font-size:15px;color:#222;transform:scaleX(0.8800);">N</div>
<div style="position:absolute;left:1251px;top:255px;width:1px;height:22px;background:#c6c6c6"></div>
<div class="t" style="left:1189.37px;top:258.30px;font-size:15px;color:#222;transform:scaleX(0.8800);">O</div>
<div style="position:absolute;left:1364px;top:255px;width:1px;height:22px;background:#c6c6c6"></div>
<div class="t" style="left:1303.10px;top:258.30px;font-size:15px;color:#222;transform:scaleX(0.8800);">P</div>
<div style="position:absolute;left:1441px;top:255px;width:1px;height:22px;background:#c6c6c6"></div>
<div class="t" style="left:1397.37px;top:258.30px;font-size:15px;color:#222;transform:scaleX(0.8800);">Q</div>
<div style="position:absolute;left:1513px;top:255px;width:1px;height:22px;background:#c6c6c6"></div>
<div class="t" style="left:1472.23px;top:258.30px;font-size:15px;color:#222;transform:scaleX(0.8800);">R</div>
<div style="position:absolute;left:1626px;top:255px;width:1px;height:22px;background:#c6c6c6"></div>
<div class="t" style="left:1565.10px;top:258.30px;font-size:15px;color:#222;transform:scaleX(0.8800);">S</div>
<div style="position:absolute;left:1700px;top:255px;width:1px;height:22px;background:#c6c6c6"></div>
<div class="t" style="left:1658.97px;top:258.30px;font-size:15px;color:#222;transform:scaleX(0.8800);">T</div>
<div style="position:absolute;left:1774px;top:255px;width:1px;height:22px;background:#c6c6c6"></div>
<div class="t" style="left:1732.23px;top:258.30px;font-size:15px;color:#222;transform:scaleX(0.8800);">U</div>
<div style="position:absolute;left:1848px;top:255px;width:1px;height:22px;background:#c6c6c6"></div>
<div class="t" style="left:1806.60px;top:258.30px;font-size:15px;color:#222;transform:scaleX(0.8800);">V</div>
<div style="position:absolute;left:1895px;top:255px;width:1px;height:22px;background:#c6c6c6"></div>
<div class="t" style="left:1879.77px;top:258.30px;font-size:15px;color:#222;transform:scaleX(0.8800);">W</div>
<div style="position:absolute;left:0px;top:277px;width:34px;height:697px;background:#e6e6e6"></div>
<div style="position:absolute;left:33px;top:277px;width:1px;height:697px;background:#ababab"></div>
<div style="position:absolute;left:0px;top:336px;width:33px;height:1px;background:#c6c6c6"></div>
<div class="t" style="left:13.25px;top:314.90px;font-size:15px;color:#222;transform:scaleX(0.9000);">1</div>
<div style="position:absolute;left:0px;top:368px;width:33px;height:1px;background:#c6c6c6"></div>
<div class="t" style="left:13.25px;top:350.80px;font-size:15px;color:#222;transform:scaleX(0.9000);">2</div>
<div style="position:absolute;left:0px;top:411px;width:33px;height:1px;background:#c6c6c6"></div>
<div class="t" style="left:13.25px;top:393.80px;font-size:15px;color:#222;transform:scaleX(0.9000);">3</div>
<div style="position:absolute;left:0px;top:411px;width:33px;height:30px;background:#d2d2d2"></div>
<div style="position:absolute;left:31px;top:411px;width:2px;height:30px;background:#217346"></div>
<div style="position:absolute;left:0px;top:441px;width:33px;height:1px;background:#c6c6c6"></div>
<div class="t" style="left:13.25px;top:423.80px;font-size:15px;color:#222;transform:scaleX(0.9000);">4</div>
<div style="position:absolute;left:0px;top:471px;width:33px;height:1px;background:#c6c6c6"></div>
<div class="t" style="left:13.25px;top:453.80px;font-size:15px;color:#222;transform:scaleX(0.9000);">5</div>
<div style="position:absolute;left:0px;top:501px;width:33px;height:1px;background:#c6c6c6"></div>
<div class="t" style="left:13.25px;top:483.80px;font-size:15px;color:#222;transform:scaleX(0.9000);">6</div>
<div style="position:absolute;left:0px;top:531px;width:33px;height:1px;background:#c6c6c6"></div>
<div class="t" style="left:13.25px;top:513.80px;font-size:15px;color:#222;transform:scaleX(0.9000);">7</div>
<div style="position:absolute;left:0px;top:561px;width:33px;height:1px;background:#c6c6c6"></div>
<div class="t" style="left:13.25px;top:543.80px;font-size:15px;color:#222;transform:scaleX(0.9000);">8</div>
<div style="position:absolute;left:0px;top:591px;width:33px;height:1px;background:#c6c6c6"></div>
<div class="t" style="left:13.25px;top:573.80px;font-size:15px;color:#222;transform:scaleX(0.9000);">9</div>
<div style="position:absolute;left:0px;top:621px;width:33px;height:1px;background:#c6c6c6"></div>
<div class="t" style="left:9.49px;top:603.80px;font-size:15px;color:#222;transform:scaleX(0.9000);">10</div>
<div style="position:absolute;left:0px;top:651px;width:33px;height:1px;background:#c6c6c6"></div>
<div class="t" style="left:9.99px;top:633.80px;font-size:15px;color:#222;transform:scaleX(0.9000);">11</div>
<div style="position:absolute;left:0px;top:681px;width:33px;height:1px;background:#c6c6c6"></div>
<div class="t" style="left:9.49px;top:663.80px;font-size:15px;color:#222;transform:scaleX(0.9000);">12</div>
<div style="position:absolute;left:0px;top:711px;width:33px;height:1px;background:#c6c6c6"></div>
<div class="t" style="left:9.49px;top:693.80px;font-size:15px;color:#222;transform:scaleX(0.9000);">13</div>
<div style="position:absolute;left:0px;top:741px;width:33px;height:1px;background:#c6c6c6"></div>
<div class="t" style="left:9.49px;top:723.80px;font-size:15px;color:#222;transform:scaleX(0.9000);">14</div>
<div style="position:absolute;left:0px;top:771px;width:33px;height:1px;background:#c6c6c6"></div>
<div class="t" style="left:9.49px;top:753.80px;font-size:15px;color:#222;transform:scaleX(0.9000);">15</div>
<div style="position:absolute;left:0px;top:801px;width:33px;height:1px;background:#c6c6c6"></div>
<div class="t" style="left:9.49px;top:783.80px;font-size:15px;color:#222;transform:scaleX(0.9000);">16</div>
<div style="position:absolute;left:0px;top:831px;width:33px;height:1px;background:#c6c6c6"></div>
<div class="t" style="left:9.49px;top:813.80px;font-size:15px;color:#222;transform:scaleX(0.9000);">17</div>
<div style="position:absolute;left:0px;top:861px;width:33px;height:1px;background:#c6c6c6"></div>
<div class="t" style="left:9.49px;top:843.80px;font-size:15px;color:#222;transform:scaleX(0.9000);">18</div>
<div style="position:absolute;left:0px;top:891px;width:33px;height:1px;background:#c6c6c6"></div>
<div class="t" style="left:9.49px;top:873.80px;font-size:15px;color:#222;transform:scaleX(0.9000);">19</div>
<div style="position:absolute;left:0px;top:921px;width:33px;height:1px;background:#c6c6c6"></div>
<div class="t" style="left:9.49px;top:903.80px;font-size:15px;color:#222;transform:scaleX(0.9000);">20</div>
<div style="position:absolute;left:0px;top:951px;width:33px;height:1px;background:#c6c6c6"></div>
<div class="t" style="left:9.49px;top:933.80px;font-size:15px;color:#222;transform:scaleX(0.9000);">21</div>
<div style="position:absolute;left:0px;top:981px;width:33px;height:1px;background:#c6c6c6"></div>
<div class="t" style="left:9.49px;top:963.80px;font-size:15px;color:#222;transform:scaleX(0.9000);">22</div>
<div class="t" style="left:61.70px;top:296.56px;font-size:37.5px;color:#555555;transform:scaleX(1.0252);-webkit-text-stroke:0.8px #fff;">Project Management Task List</div>
<div style="position:absolute;left:762px;top:336px;width:1px;height:33px;background:#d0d0d0"></div>
<div style="position:absolute;left:973px;top:336px;width:1px;height:33px;background:#d0d0d0"></div>
<div style="position:absolute;left:1117px;top:336px;width:1px;height:33px;background:#d0d0d0"></div>
<div class="t" style="left:822.25px;top:346.92px;font-size:12.5px;color:#595959;transform:scaleX(1.0792);">Planned Dates</div>
<div class="t" style="left:990.50px;top:346.92px;font-size:12.5px;color:#595959;transform:scaleX(1.1077);">Planned Duration</div>
<div style="position:absolute;left:55px;top:368px;width:1063px;height:43px;background:#808080"></div>
<div class="t" style="left:58.00px;top:382.30px;font-size:15px;color:#fff;transform:scaleX(0.9305);">Task</div>
<div class="t" style="left:107.20px;top:382.30px;font-size:15px;color:#fff;transform:scaleX(1.0405);">Task Description</div>
<div class="t" style="left:269.00px;top:382.30px;font-size:15px;color:#fff;transform:scaleX(0.9830);">Status</div>
<div class="t" style="left:375.60px;top:382.30px;font-size:15px;color:#fff;transform:scaleX(1.1304);">Category</div>
<div class="t" style="left:484.60px;top:382.30px;font-size:15px;color:#fff;transform:scaleX(1.0154);">Assigned To</div>
<div class="t" style="left:666.15px;top:372.75px;font-size:14px;color:#fff;transform:scaleX(0.9399);">%</div>
<div class="t" style="left:636.05px;top:392.10px;font-size:15px;color:#fff;transform:scaleX(1.1044);">Complete</div>
<div class="t" style="left:802.95px;top:382.30px;font-size:15px;color:#fff;">Start</div>
<div class="t" style="left:904.40px;top:382.30px;font-size:15px;color:#fff;transform:scaleX(0.8997);">Finish</div>
<div class="t" style="left:988.50px;top:382.30px;font-size:15px;color:#fff;transform:scaleX(0.9797);">Hours</div>
<div class="t" style="left:1062.25px;top:382.30px;font-size:15px;color:#fff;transform:scaleX(1.0095);">Days</div>
<div style="position:absolute;left:1045px;top:411px;width:72px;height:300px;background:#f2f2f2"></div>
<div style="position:absolute;left:56px;top:441px;width:1061px;height:1px;background:#d9d9d9"></div>
<div class="t" style="left:58.00px;top:423.80px;font-size:15px;color:#111;-webkit-text-stroke:0.2px #fff;">1</div>
<div class="t" style="left:107.20px;top:423.80px;font-size:15px;color:#e0452c;transform:scaleX(1.0068);-webkit-text-stroke:0.2px #fff;">Enter Task Here</div>
<div class="t" style="left:269.00px;top:423.80px;font-size:15px;color:#111;transform:scaleX(0.9400);-webkit-text-stroke:0.2px #fff;">Status 1</div>
<div class="t" style="left:375.60px;top:423.80px;font-size:15px;color:#111;transform:scaleX(1.0850);-webkit-text-stroke:0.2px #fff;">Category 1</div>
<div class="t" style="left:484.60px;top:423.80px;font-size:15px;color:#111;transform:scaleX(1.0300);-webkit-text-stroke:0.2px #fff;">Employee 1</div>
<div class="t" style="left:655.24px;top:423.80px;font-size:15px;color:#111;transform:scaleX(0.9000);-webkit-text-stroke:0.2px #fff;">100%</div>
<div class="t" style="left:787.60px;top:418.30px;font-size:15px;color:#404040;transform:scaleX(0.9592);">01-01-2019</div>
<div class="t" style="left:886.00px;top:418.30px;font-size:15px;color:#404040;transform:scaleX(0.9488);">01-02-2019</div>
<div class="t" style="left:998.44px;top:423.80px;font-size:15px;color:#111;transform:scaleX(0.9400);">240</div>
<div class="t" style="left:1077.02px;top:418.30px;font-size:15px;color:#111;transform:scaleX(0.9200);">30</div>
<div style="position:absolute;left:56px;top:471px;width:1061px;height:1px;background:#d9d9d9"></div>
<div class="t" style="left:58.00px;top:453.80px;font-size:15px;color:#111;-webkit-text-stroke:0.2px #fff;">2</div>
<div class="t" style="left:107.20px;top:453.80px;font-size:15px;color:#e0452c;transform:scaleX(1.0068);-webkit-text-stroke:0.2px #fff;">Enter Task Here</div>
<div class="t" style="left:269.00px;top:453.80px;font-size:15px;color:#111;transform:scaleX(0.9400);-webkit-text-stroke:0.2px #fff;">Status 2</div>
<div class="t" style="left:375.60px;top:453.80px;font-size:15px;color:#111;transform:scaleX(1.0850);-webkit-text-stroke:0.2px #fff;">Category 2</div>
<div class="t" style="left:484.60px;top:453.80px;font-size:15px;color:#111;transform:scaleX(1.0300);-webkit-text-stroke:0.2px #fff;">Employee 2</div>
<div class="t" style="left:655.24px;top:453.80px;font-size:15px;color:#111;transform:scaleX(0.9000);-webkit-text-stroke:0.2px #fff;">100%</div>
<div class="t" style="left:787.60px;top:448.30px;font-size:15px;color:#404040;transform:scaleX(0.9592);">15-01-2019</div>
<div class="t" style="left:886.00px;top:448.30px;font-size:15px;color:#404040;transform:scaleX(0.9488);">21-03-2019</div>
<div class="t" style="left:998.44px;top:453.80px;font-size:15px;color:#111;transform:scaleX(0.9400);">528</div>
<div class="t" style="left:1077.02px;top:448.30px;font-size:15px;color:#111;transform:scaleX(0.9200);">66</div>
<div style="position:absolute;left:56px;top:501px;width:1061px;height:1px;background:#d9d9d9"></div>
<div class="t" style="left:58.00px;top:483.80px;font-size:15px;color:#111;-webkit-text-stroke:0.2px #fff;">3</div>
<div class="t" style="left:107.20px;top:483.80px;font-size:15px;color:#e0452c;transform:scaleX(1.0068);-webkit-text-stroke:0.2px #fff;">Enter Task Here</div>
<div class="t" style="left:269.00px;top:483.80px;font-size:15px;color:#111;transform:scaleX(0.9400);-webkit-text-stroke:0.2px #fff;">Status 3</div>
<div class="t" style="left:375.60px;top:483.80px;font-size:15px;color:#111;transform:scaleX(1.0850);-webkit-text-stroke:0.2px #fff;">Category 3</div>
<div class="t" style="left:484.60px;top:483.80px;font-size:15px;color:#111;transform:scaleX(1.0300);-webkit-text-stroke:0.2px #fff;">Employee 3</div>
<div class="t" style="left:655.24px;top:483.80px;font-size:15px;color:#111;transform:scaleX(0.9000);-webkit-text-stroke:0.2px #fff;">100%</div>
<div class="t" style="left:787.60px;top:478.30px;font-size:15px;color:#404040;transform:scaleX(0.9592);">01-02-2019</div>
<div class="t" style="left:886.00px;top:478.30px;font-size:15px;color:#404040;transform:scaleX(0.9627);">11-04-2019</div>
<div class="t" style="left:998.44px;top:483.80px;font-size:15px;color:#111;transform:scaleX(0.9400);">560</div>
<div class="t" style="left:1077.02px;top:478.30px;font-size:15px;color:#111;transform:scaleX(0.9200);">70</div>
<div style="position:absolute;left:56px;top:531px;width:1061px;height:1px;background:#d9d9d9"></div>
<div class="t" style="left:58.00px;top:513.80px;font-size:15px;color:#111;-webkit-text-stroke:0.2px #fff;">4</div>
<div class="t" style="left:107.20px;top:513.80px;font-size:15px;color:#e0452c;transform:scaleX(1.0068);-webkit-text-stroke:0.2px #fff;">Enter Task Here</div>
<div class="t" style="left:269.00px;top:513.80px;font-size:15px;color:#111;transform:scaleX(0.9400);-webkit-text-stroke:0.2px #fff;">Status 4</div>
<div class="t" style="left:375.60px;top:513.80px;font-size:15px;color:#111;transform:scaleX(1.0850);-webkit-text-stroke:0.2px #fff;">Category 4</div>
<div class="t" style="left:484.60px;top:513.80px;font-size:15px;color:#111;transform:scaleX(1.0300);-webkit-text-stroke:0.2px #fff;">Employee 4</div>
<div class="t" style="left:655.24px;top:513.80px;font-size:15px;color:#111;transform:scaleX(0.9000);-webkit-text-stroke:0.2px #fff;">100%</div>
<div class="t" style="left:787.60px;top:508.30px;font-size:15px;color:#404040;transform:scaleX(0.9592);">10-03-2019</div>
<div class="t" style="left:886.00px;top:508.30px;font-size:15px;color:#404040;transform:scaleX(0.9488);">19-04-2019</div>
<div class="t" style="left:998.44px;top:513.80px;font-size:15px;color:#111;transform:scaleX(0.9400);">312</div>
<div class="t" style="left:1077.02px;top:508.30px;font-size:15px;color:#111;transform:scaleX(0.9200);">39</div>
<div style="position:absolute;left:56px;top:561px;width:1061px;height:1px;background:#d9d9d9"></div>
<div class="t" style="left:58.00px;top:543.80px;font-size:15px;color:#111;-webkit-text-stroke:0.2px #fff;">5</div>
<div class="t" style="left:107.20px;top:543.80px;font-size:15px;color:#e0452c;transform:scaleX(1.0068);-webkit-text-stroke:0.2px #fff;">Enter Task Here</div>
<div class="t" style="left:269.00px;top:543.80px;font-size:15px;color:#111;transform:scaleX(0.9400);-webkit-text-stroke:0.2px #fff;">Status 5</div>
<div class="t" style="left:375.60px;top:543.80px;font-size:15px;color:#111;transform:scaleX(1.0850);-webkit-text-stroke:0.2px #fff;">Category 5</div>
<div class="t" style="left:484.60px;top:543.80px;font-size:15px;color:#111;transform:scaleX(1.0300);-webkit-text-stroke:0.2px #fff;">Employee 5</div>
<div class="t" style="left:655.24px;top:543.80px;font-size:15px;color:#111;transform:scaleX(0.9000);-webkit-text-stroke:0.2px #fff;">100%</div>
<div class="t" style="left:787.60px;top:538.30px;font-size:15px;color:#404040;transform:scaleX(0.9592);">20-04-2019</div>
<div class="t" style="left:886.00px;top:538.30px;font-size:15px;color:#404040;transform:scaleX(0.9488);">15-05-2019</div>
<div class="t" style="left:998.44px;top:543.80px;font-size:15px;color:#111;transform:scaleX(0.9400);">200</div>
<div class="t" style="left:1077.02px;top:538.30px;font-size:15px;color:#111;transform:scaleX(0.9200);">25</div>
<div style="position:absolute;left:56px;top:591px;width:1061px;height:1px;background:#d9d9d9"></div>
<div class="t" style="left:58.00px;top:573.80px;font-size:15px;color:#111;-webkit-text-stroke:0.2px #fff;">6</div>
<div class="t" style="left:107.20px;top:573.80px;font-size:15px;color:#e0452c;transform:scaleX(1.0068);-webkit-text-stroke:0.2px #fff;">Enter Task Here</div>
<div class="t" style="left:269.00px;top:573.80px;font-size:15px;color:#111;transform:scaleX(0.9400);-webkit-text-stroke:0.2px #fff;">Status 6</div>
<div class="t" style="left:375.60px;top:573.80px;font-size:15px;color:#111;transform:scaleX(1.0850);-webkit-text-stroke:0.2px #fff;">Category 6</div>
<div class="t" style="left:484.60px;top:573.80px;font-size:15px;color:#111;transform:scaleX(1.0300);-webkit-text-stroke:0.2px #fff;">Employee 6</div>
<div class="t" style="left:658.99px;top:573.80px;font-size:15px;color:#111;transform:scaleX(0.9000);-webkit-text-stroke:0.2px #fff;">65%</div>
<div class="t" style="left:787.60px;top:568.30px;font-size:15px;color:#404040;transform:scaleX(0.9592);">15-05-2019</div>
<div class="t" style="left:886.00px;top:568.30px;font-size:15px;color:#404040;transform:scaleX(0.9488);">25-06-2019</div>
<div class="t" style="left:998.44px;top:573.80px;font-size:15px;color:#111;transform:scaleX(0.9400);">320</div>
<div class="t" style="left:1077.02px;top:568.30px;font-size:15px;color:#111;transform:scaleX(0.9200);">40</div>
<div style="position:absolute;left:56px;top:621px;width:1061px;height:1px;background:#d9d9d9"></div>
<div class="t" style="left:58.00px;top:603.80px;font-size:15px;color:#111;-webkit-text-stroke:0.2px #fff;">7</div>
<div class="t" style="left:107.20px;top:603.80px;font-size:15px;color:#e0452c;transform:scaleX(1.0068);-webkit-text-stroke:0.2px #fff;">Enter Task Here</div>
<div class="t" style="left:269.00px;top:603.80px;font-size:15px;color:#111;transform:scaleX(0.9400);-webkit-text-stroke:0.2px #fff;">Status 7</div>
<div class="t" style="left:375.60px;top:603.80px;font-size:15px;color:#111;transform:scaleX(1.0850);-webkit-text-stroke:0.2px #fff;">Category 7</div>
<div class="t" style="left:484.60px;top:603.80px;font-size:15px;color:#111;transform:scaleX(1.0300);-webkit-text-stroke:0.2px #fff;">Employee 7</div>
<div class="t" style="left:658.99px;top:603.80px;font-size:15px;color:#111;transform:scaleX(0.9000);-webkit-text-stroke:0.2px #fff;">45%</div>
<div class="t" style="left:787.60px;top:598.30px;font-size:15px;color:#404040;transform:scaleX(0.9592);">10-06-2019</div>
<div class="t" style="left:886.00px;top:598.30px;font-size:15px;color:#404040;transform:scaleX(0.9488);">21-06-2019</div>
<div class="t" style="left:1002.36px;top:603.80px;font-size:15px;color:#111;transform:scaleX(0.9400);">88</div>
<div class="t" style="left:1077.54px;top:598.30px;font-size:15px;color:#111;transform:scaleX(0.9200);">11</div>
<div style="position:absolute;left:56px;top:651px;width:1061px;height:1px;background:#d9d9d9"></div>
<div class="t" style="left:58.00px;top:633.80px;font-size:15px;color:#111;-webkit-text-stroke:0.2px #fff;">8</div>
<div class="t" style="left:107.20px;top:633.80px;font-size:15px;color:#e0452c;transform:scaleX(1.0068);-webkit-text-stroke:0.2px #fff;">Enter Task Here</div>
<div class="t" style="left:269.00px;top:633.80px;font-size:15px;color:#111;transform:scaleX(0.9400);-webkit-text-stroke:0.2px #fff;">Status 4</div>
<div class="t" style="left:375.60px;top:633.80px;font-size:15px;color:#111;transform:scaleX(1.0850);-webkit-text-stroke:0.2px #fff;">Category 6</div>
<div class="t" style="left:484.60px;top:633.80px;font-size:15px;color:#111;transform:scaleX(1.0300);-webkit-text-stroke:0.2px #fff;">Employee 2</div>
<div class="t" style="left:658.99px;top:633.80px;font-size:15px;color:#111;transform:scaleX(0.9000);-webkit-text-stroke:0.2px #fff;">50%</div>
<div class="t" style="left:787.60px;top:628.30px;font-size:15px;color:#404040;transform:scaleX(0.9592);">25-06-2019</div>
<div class="t" style="left:886.00px;top:628.30px;font-size:15px;color:#404040;transform:scaleX(0.9488);">31-07-2019</div>
<div class="t" style="left:998.44px;top:633.80px;font-size:15px;color:#111;transform:scaleX(0.9400);">288</div>
<div class="t" style="left:1077.02px;top:628.30px;font-size:15px;color:#111;transform:scaleX(0.9200);">36</div>
<div style="position:absolute;left:56px;top:681px;width:1061px;height:1px;background:#d9d9d9"></div>
<div class="t" style="left:58.00px;top:663.80px;font-size:15px;color:#111;-webkit-text-stroke:0.2px #fff;">9</div>
<div class="t" style="left:107.20px;top:663.80px;font-size:15px;color:#e0452c;transform:scaleX(1.0068);-webkit-text-stroke:0.2px #fff;">Enter Task Here</div>
<div class="t" style="left:269.00px;top:663.80px;font-size:15px;color:#111;transform:scaleX(0.9400);-webkit-text-stroke:0.2px #fff;">Status 6</div>
<div class="t" style="left:375.60px;top:663.80px;font-size:15px;color:#111;transform:scaleX(1.0850);-webkit-text-stroke:0.2px #fff;">Category 1</div>
<div class="t" style="left:484.60px;top:663.80px;font-size:15px;color:#111;transform:scaleX(1.0300);-webkit-text-stroke:0.2px #fff;">Employee 4</div>
<div class="t" style="left:658.99px;top:663.80px;font-size:15px;color:#111;transform:scaleX(0.9000);-webkit-text-stroke:0.2px #fff;">45%</div>
<div class="t" style="left:787.60px;top:658.30px;font-size:15px;color:#404040;transform:scaleX(0.9592);">05-07-2019</div>
<div class="t" style="left:886.00px;top:658.30px;font-size:15px;color:#404040;transform:scaleX(0.9488);">01-08-2019</div>
<div class="t" style="left:998.44px;top:663.80px;font-size:15px;color:#111;transform:scaleX(0.9400);">208</div>
<div class="t" style="left:1077.02px;top:658.30px;font-size:15px;color:#111;transform:scaleX(0.9200);">26</div>
<div class="t" style="left:58.00px;top:693.80px;font-size:15px;color:#111;-webkit-text-stroke:0.2px #fff;">10</div>
<div class="t" style="left:107.20px;top:693.80px;font-size:15px;color:#e0452c;transform:scaleX(1.0068);-webkit-text-stroke:0.2px #fff;">Enter Task Here</div>
<div class="t" style="left:269.00px;top:693.80px;font-size:15px;color:#111;transform:scaleX(0.9400);-webkit-text-stroke:0.2px #fff;">Status 3</div>
<div class="t" style="left:375.60px;top:693.80px;font-size:15px;color:#111;transform:scaleX(1.0850);-webkit-text-stroke:0.2px #fff;">Category 5</div>
<div class="t" style="left:484.60px;top:693.80px;font-size:15px;color:#111;transform:scaleX(1.0300);-webkit-text-stroke:0.2px #fff;">Employee 1</div>
<div class="t" style="left:658.99px;top:693.80px;font-size:15px;color:#111;transform:scaleX(0.9000);-webkit-text-stroke:0.2px #fff;">30%</div>
<div class="t" style="left:787.60px;top:688.30px;font-size:15px;color:#404040;transform:scaleX(0.9592);">10-08-2019</div>
<div class="t" style="left:886.00px;top:688.30px;font-size:15px;color:#404040;transform:scaleX(0.9488);">21-09-2019</div>
<div class="t" style="left:998.44px;top:693.80px;font-size:15px;color:#111;transform:scaleX(0.9400);">328</div>
<div class="t" style="left:1077.02px;top:688.30px;font-size:15px;color:#111;transform:scaleX(0.9200);">41</div>
<div style="position:absolute;left:55px;top:368px;width:1px;height:344px;background:#222"></div>
<div style="position:absolute;left:55px;top:711px;width:1063px;height:1px;background:#333"></div>
<div style="position:absolute;left:1117px;top:368px;width:1px;height:344px;background:#555"></div>
<div style="position:absolute;left:103px;top:410px;width:165px;height:33px;border:2px solid #217346;box-sizing:border-box"></div>
<div style="position:absolute;left:264px;top:439px;width:5px;height:5px;background:#217346;outline:1px solid #fff"></div>
<div style="position:absolute;left:1139px;top:336px;width:1px;height:33px;background:#d0d0d0"></div>
<div style="position:absolute;left:1364px;top:336px;width:1px;height:33px;background:#d0d0d0"></div>
<div style="position:absolute;left:1513px;top:336px;width:1px;height:33px;background:#d0d0d0"></div>
<div class="t" style="left:1212.50px;top:346.92px;font-size:12.5px;color:#595959;transform:scaleX(1.0724);">Actual Dates</div>
<div class="t" style="left:1390.00px;top:346.92px;font-size:12.5px;color:#595959;transform:scaleX(1.1186);">Actual Duration</div>
<div style="position:absolute;left:1139px;top:368px;width:375px;height:43px;background:#808080"></div>
<div class="t" style="left:1178.95px;top:382.30px;font-size:15px;color:#fff;">Start</div>
<div class="t" style="left:1290.35px;top:382.30px;font-size:15px;color:#fff;transform:scaleX(0.9072);">Finish</div>
<div class="t" style="left:1381.05px;top:382.30px;font-size:15px;color:#fff;">Hours</div>
<div class="t" style="left:1458.00px;top:382.30px;font-size:15px;color:#fff;transform:scaleX(1.0241);">Days</div>
<div style="position:absolute;left:1441px;top:411px;width:72px;height:300px;background:#fff2cc"></div>
<div style="position:absolute;left:1140px;top:441px;width:373px;height:1px;background:#d9d9d9"></div>
<div class="t" style="left:1158.00px;top:418.30px;font-size:15px;color:#404040;transform:scaleX(0.9592);">10-01-2019</div>
<div class="t" style="left:1270.80px;top:418.30px;font-size:15px;color:#404040;transform:scaleX(0.9592);">25-02-2019</div>
<div class="t" style="left:1391.05px;top:423.80px;font-size:15px;color:#111;transform:scaleX(0.9709);">360</div>
<div class="t" style="left:1469.75px;top:418.96px;font-size:16px;color:#111;transform:scaleX(0.9945);">45</div>
<div style="position:absolute;left:1140px;top:471px;width:373px;height:1px;background:#d9d9d9"></div>
<div class="t" style="left:1158.00px;top:448.30px;font-size:15px;color:#404040;transform:scaleX(0.9592);">01-02-2019</div>
<div class="t" style="left:1270.80px;top:448.30px;font-size:15px;color:#404040;transform:scaleX(0.9592);">26-02-2019</div>
<div class="t" style="left:1391.05px;top:453.80px;font-size:15px;color:#111;transform:scaleX(0.9709);">200</div>
<div class="t" style="left:1469.75px;top:448.96px;font-size:16px;color:#111;transform:scaleX(0.9945);">25</div>
<div style="position:absolute;left:1140px;top:501px;width:373px;height:1px;background:#d9d9d9"></div>
<div class="t" style="left:1158.00px;top:478.30px;font-size:15px;color:#404040;transform:scaleX(0.9592);">01-02-2019</div>
<div class="t" style="left:1270.80px;top:478.30px;font-size:15px;color:#404040;transform:scaleX(0.9592);">27-02-2019</div>
<div class="t" style="left:1391.05px;top:483.80px;font-size:15px;color:#111;transform:scaleX(0.9709);">208</div>
<div class="t" style="left:1469.75px;top:478.96px;font-size:16px;color:#111;transform:scaleX(0.9945);">26</div>
<div style="position:absolute;left:1140px;top:531px;width:373px;height:1px;background:#d9d9d9"></div>
<div class="t" style="left:1158.00px;top:508.30px;font-size:15px;color:#404040;transform:scaleX(0.9592);">10-04-2019</div>
<div class="t" style="left:1270.80px;top:508.30px;font-size:15px;color:#404040;transform:scaleX(0.9592);">28-05-2019</div>
<div class="t" style="left:1391.05px;top:513.80px;font-size:15px;color:#111;transform:scaleX(0.9709);">384</div>
<div class="t" style="left:1469.75px;top:508.96px;font-size:16px;color:#111;transform:scaleX(0.9945);">48</div>
<div style="position:absolute;left:1140px;top:561px;width:373px;height:1px;background:#d9d9d9"></div>
<div class="t" style="left:1158.00px;top:538.30px;font-size:15px;color:#404040;transform:scaleX(0.9592);">25-04-2019</div>
<div class="t" style="left:1270.80px;top:538.30px;font-size:15px;color:#404040;transform:scaleX(0.9592);">01-06-2019</div>
<div class="t" style="left:1391.05px;top:543.80px;font-size:15px;color:#111;transform:scaleX(0.9709);">288</div>
<div class="t" style="left:1469.75px;top:538.96px;font-size:16px;color:#111;transform:scaleX(0.9945);">36</div>
<div style="position:absolute;left:1140px;top:591px;width:373px;height:1px;background:#d9d9d9"></div>
<div class="t" style="left:1158.00px;top:568.30px;font-size:15px;color:#404040;transform:scaleX(0.9592);">01-06-2019</div>
<div class="t" style="left:1270.80px;top:568.30px;font-size:15px;color:#404040;transform:scaleX(0.9592);">20-07-2019</div>
<div class="t" style="left:1391.05px;top:573.80px;font-size:15px;color:#111;transform:scaleX(0.9709);">392</div>
<div class="t" style="left:1469.75px;top:568.96px;font-size:16px;color:#111;transform:scaleX(0.9945);">49</div>
<div style="position:absolute;left:1140px;top:621px;width:373px;height:1px;background:#d9d9d9"></div>
<div style="position:absolute;left:1140px;top:651px;width:373px;height:1px;background:#d9d9d9"></div>
<div style="position:absolute;left:1140px;top:681px;width:373px;height:1px;background:#d9d9d9"></div>
<div style="position:absolute;left:1138px;top:368px;width:1px;height:344px;background:#222"></div>
<div style="position:absolute;left:1138px;top:711px;width:376px;height:1px;background:#333"></div>
<div style="position:absolute;left:1513px;top:368px;width:1px;height:344px;background:#222"></div>
<div style="position:absolute;left:54px;top:740px;width:661px;height:62px;background:#d24726;border:2px solid #c00000;box-sizing:border-box"></div>
<div class="t" style="left:130.20px;top:762.53px;font-size:16.5px;color:#fff;transform:scaleX(1.0567);text-decoration:underline;">Make beautiful Gantt charts in PowerPoint for important meetings.</div>
<div style="position:absolute;left:761px;top:740px;width:753px;height:62px;background:#57b05e;border:2px solid #3d6b33;box-sizing:border-box"></div>
<div class="t" style="left:778.70px;top:763.63px;font-size:16.5px;color:#fff;transform:scaleX(1.0485);text-decoration:underline;">Instantly turn Excel data into PowerPoint slides with the Office Timeline add-in for PowerPoint.</div>
<div style="position:absolute;left:54px;top:838px;width:659px;height:136px;background:#e9e9e9;box-shadow:0 0 0 1px #fafafa,0 0 6px 2px rgba(0,0,0,0.16);overflow:hidden"></div>
<svg style="position:absolute;left:54px;top:838px;" width="659" height="136" viewBox="0 0 659 136"><path d="M210 0 H659 V136 H223 Z" fill="#efefef"/><path d="M290 0 H659 V136 H345 Z" fill="#f4f4f4"/></svg>
<div style="position:absolute;left:54px;top:838px;width:3.5px;height:136px;background:#c9532e"></div>
<svg style="position:absolute;left:68px;top:853px;" width="17" height="14" viewBox="0 0 17 14"><path d="M0 4 H12 M0 9 H6 H12 M0 13 H16" stroke="#c0502a" stroke-width="2"/><path d="M1 0 V13 M6 4 V13 M12 4 V13" stroke="#c0502a" stroke-width="1.3"/><rect x="1" y="0" width="6" height="2" fill="#c0502a"/></svg>
<div class="t" style="left:89.20px;top:856.34px;font-size:12px;color:#c0502a;font-weight:bold;transform:scaleX(0.8810);">OfficeTIMELINE</div>
<svg style="position:absolute;left:91px;top:877px;" width="24" height="8" viewBox="0 0 24 8"><path d="M2 3 H6 A2.5 2.5 0 0 1 6 8 M3.5 1 L1.5 3 L3.5 5" fill="none" stroke="#cfcfcf" stroke-width="1"/><path d="M22 3 H18 A2.5 2.5 0 0 0 18 8 M20.5 1 L22.5 3 L20.5 5" fill="none" stroke="#cfcfcf" stroke-width="1"/></svg>
<div style="position:absolute;left:68px;top:892px;width:532px;height:24px;background:#b4502f"></div>
<div class="t" style="left:103.20px;top:899.88px;font-size:9px;color:#fff;transform:scaleX(0.8399);">Title</div>
<div class="t" style="left:374.50px;top:899.88px;font-size:9px;color:#fff;transform:scaleX(0.9680);">T/M</div>
<div class="t" style="left:403.70px;top:899.88px;font-size:9px;color:#fff;transform:scaleX(0.7892);">Start</div>
<div class="t" style="left:454.70px;top:899.88px;font-size:9px;color:#fff;transform:scaleX(0.7493);">End</div>
<svg style="position:absolute;left:511px;top:900px;" width="11" height="11" viewBox="0 0 11 11"><path d="M3 2 A4.5 4.5 0 1 1 1.5 6" fill="none" stroke="#fff" stroke-width="1.2"/><path d="M5.5 3.5 V6 H7.5" fill="none" stroke="#fff" stroke-width="1"/></svg>
<div class="t" style="left:542.00px;top:899.53px;font-size:10px;color:#fff;transform:scaleX(0.8997);">%</div>
<div style="position:absolute;left:68px;top:916px;width:532px;height:58px;background:#fff"></div>
<div style="position:absolute;left:88px;top:941px;width:492px;height:18px;background:#f8f8f8"></div>
<div style="position:absolute;left:88px;top:940px;width:492px;height:1px;background:#d6d6d6"></div>
<div style="position:absolute;left:93px;top:959px;width:487px;height:0px;border-top:1px dashed #d6d6d6"></div>
<div style="position:absolute;left:592px;top:918px;width:4px;height:56px;background:#c8c8c8"></div>
<div class="t" style="left:103.20px;top:928.20px;font-size:8.5px;color:#444;transform:scaleX(0.7414);">Product Planning</div>
<div class="t" style="left:374.50px;top:927.63px;font-size:8px;color:#aaa;transform:scaleX(0.8185);">T</div>
<svg style="position:absolute;left:384px;top:928px;" width="11" height="8" viewBox="0 0 11 8"><path d="M0 2.5 H5.5 V0 L10.5 4 L5.5 8 V5.5 H0 Z" fill="#7030a0"/></svg>
<div class="t" style="left:403.70px;top:928.20px;font-size:8.5px;color:#555;transform:scaleX(0.7592);">25/02/2018</div>
<div class="t" style="left:454.70px;top:928.20px;font-size:8.5px;color:#555;transform:scaleX(0.7522);">30/09/2018</div>
<div class="t" style="left:505.40px;top:928.20px;font-size:8.5px;color:#333;transform:scaleX(0.7073);">155 days</div>
<svg style="position:absolute;left:542px;top:926.4px;" width="13" height="13" viewBox="0 0 13 13"><circle cx="6.5" cy="6.5" r="6" fill="#fff" stroke="#ccc" stroke-width="0.9"/><path d="M6.5 0.5 A6 6 0 0 1 6.5 12.5" fill="none" stroke="#4caf50" stroke-width="0.9"/><text x="6.5" y="8.8" font-size="6" text-anchor="middle" fill="#333" font-family="Liberation Sans">55</text></svg>
<div class="t" style="left:103.20px;top:946.80px;font-size:8.5px;color:#444;transform:scaleX(0.7304);">Key Hire Recruitment</div>
<div class="t" style="left:374.50px;top:946.23px;font-size:8px;color:#aaa;transform:scaleX(0.8185);">T</div>
<div style="position:absolute;left:385px;top:947px;width:10px;height:6px;background:#7030a0;border-radius:3px"></div>
<div class="t" style="left:403.70px;top:946.80px;font-size:8.5px;color:#555;transform:scaleX(0.7592);">18/05/2018</div>
<div class="t" style="left:454.70px;top:946.80px;font-size:8.5px;color:#555;transform:scaleX(0.7522);">30/09/2018</div>
<div class="t" style="left:505.40px;top:946.80px;font-size:8.5px;color:#333;transform:scaleX(0.7121);">96 days</div>
<svg style="position:absolute;left:542px;top:945px;" width="13" height="13" viewBox="0 0 13 13"><circle cx="6.5" cy="6.5" r="6" fill="#fff" stroke="#ccc" stroke-width="0.9"/><path d="M6.5 0.5 A6 6 0 0 1 6.5 12.5" fill="none" stroke="#4caf50" stroke-width="0.9"/><text x="6.5" y="8.8" font-size="6" text-anchor="middle" fill="#333" font-family="Liberation Sans">45</text></svg>
<div class="t" style="left:103.20px;top:965.30px;font-size:8.5px;color:#444;transform:scaleX(0.7492);">Technical Onboarding</div>
<div class="t" style="left:374.50px;top:964.73px;font-size:8px;color:#aaa;transform:scaleX(0.8185);">T</div>
<div style="position:absolute;left:385px;top:965.5px;width:10px;height:6px;background:#7030a0;border-radius:3px"></div>
<div class="t" style="left:403.70px;top:965.30px;font-size:8.5px;color:#555;transform:scaleX(0.7592);">08/10/2018</div>
<div class="t" style="left:454.70px;top:965.30px;font-size:8.5px;color:#555;transform:scaleX(0.7522);">31/12/2018</div>
<div class="t" style="left:505.40px;top:965.30px;font-size:8.5px;color:#333;transform:scaleX(0.7054);">61 days</div>
<svg style="position:absolute;left:542px;top:963.5px;" width="13" height="13" viewBox="0 0 13 13"><circle cx="6.5" cy="6.5" r="6" fill="#fff" stroke="#ccc" stroke-width="0.9"/><path d="M6.5 0.5 A6 6 0 0 1 6.5 12.5" fill="none" stroke="#4caf50" stroke-width="0.9"/><text x="6.5" y="8.8" font-size="6" text-anchor="middle" fill="#333" font-family="Liberation Sans">40</text></svg>
<svg style="position:absolute;left:544px;top:866px;" width="19" height="19" viewBox="0 0 19 19"><circle cx="9.5" cy="9.5" r="9.2" fill="#fbc9b3"/><rect x="5.5" y="5" width="8" height="10" fill="none" stroke="#888" stroke-width="0.9"/><rect x="7.5" y="4" width="4" height="2" fill="#888"/></svg>
<svg style="position:absolute;left:572px;top:869px;" width="11" height="11" viewBox="0 0 11 11"><circle cx="5.5" cy="5.5" r="5" fill="none" stroke="#888" stroke-width="0.9"/><path d="M5.5 2.5 V5.5 H8" fill="none" stroke="#888" stroke-width="0.9"/></svg>
<svg style="position:absolute;left:698px;top:843px;" width="7" height="7" viewBox="0 0 7 7"><path d="M0.5 0.5 L6.5 6.5 M6.5 0.5 L0.5 6.5" stroke="#888" stroke-width="0.9"/></svg>
<svg style="position:absolute;left:631px;top:916px;" width="54" height="54" viewBox="0 0 54 54"><circle cx="27" cy="27" r="25.5" fill="none" stroke="#cfcfcf" stroke-width="2.3"/><path d="M27 1.5 A25.5 25.5 0 0 1 47.6 12" fill="none" stroke="#4caf50" stroke-width="2.3"/></svg>
<div class="t" style="left:646.00px;top:932.42px;font-size:19px;color:#444;transform:scaleX(0.9463);">15</div>
<div class="t" style="left:667.00px;top:932.77px;font-size:5px;color:#777;">%</div>
<div class="t" style="left:646.23px;top:952.84px;font-size:5.5px;color:#777;">Complete</div>
<div style="position:absolute;left:762px;top:837px;width:750px;height:137px;background:#fff;box-shadow:0 0 6px 2px rgba(0,0,0,0.14)"></div>
<div class="t" style="left:848.30px;top:877.38px;font-size:22px;color:#3b4b66;transform:scaleX(0.8512);-webkit-text-stroke:0.35px #fff;">My Project Slide</div>
<div style="position:absolute;left:1117px;top:932px;width:1px;height:42px;background:#d8d8d8"></div>
<svg style="position:absolute;left:1117px;top:932px;" width="11" height="11" viewBox="0 0 11 11"><path d="M0 0 L10.5 5.3 L0 10.6 Z" fill="#2e75b6"/></svg>
<div class="t" style="left:1130.00px;top:926.73px;font-size:8px;color:#111;font-weight:bold;transform:scaleX(0.8532);">Release 1</div>
<div class="t" style="left:1130.00px;top:938.07px;font-size:7px;color:#888;transform:scaleX(0.8750);">Dec 7</div>
<div style="position:absolute;left:1139px;top:960px;width:1px;height:14px;background:#c8b0e0"></div>
<svg style="position:absolute;left:1139px;top:960px;" width="12" height="11" viewBox="0 0 12 11"><path d="M0 0 L11 5.5 L0 11 Z" fill="#7030a0"/></svg>
<div class="t" style="left:1152.00px;top:954.73px;font-size:8px;color:#111;font-weight:bold;transform:scaleX(0.8976);">Onboarding Complete</div>
<div class="t" style="left:1152.00px;top:966.07px;font-size:7px;color:#888;transform:scaleX(0.9017);">Dec 31</div>
<div style="position:absolute;left:1895px;top:255px;width:25px;height:719px;background:#e6e6e6"></div>
<div style="position:absolute;left:1894px;top:277px;width:1px;height:697px;background:#ababab"></div>
<div style="position:absolute;left:1898px;top:257px;width:19px;height:19px;background:#fff;border:1px solid #ababab;box-sizing:border-box"></div>
<svg style="position:absolute;left:1903px;top:263px;" width="9" height="5" viewBox="0 0 9 5"><path d="M0 5 L4.5 0 L9 5 Z" fill="#777"/></svg>
<div style="position:absolute;left:1898px;top:276px;width:19px;height:411px;background:#fff;border:1px solid #ababab;box-sizing:border-box"></div>
<div style="position:absolute;left:1898px;top:687px;width:19px;height:269px;background:#dadada"></div>
<div style="position:absolute;left:1898px;top:956px;width:19px;height:18px;background:#fff;border:1px solid #ababab;box-sizing:border-box"></div>
<svg style="position:absolute;left:1903px;top:963px;" width="9" height="5" viewBox="0 0 9 5"><path d="M0 0 L4.5 5 L9 0 Z" fill="#777"/></svg>
<div style="position:absolute;left:0px;top:974px;width:1920px;height:29px;background:#e6e6e6"></div>
<div style="position:absolute;left:0px;top:974px;width:1920px;height:1px;background:#ababab"></div>
<div style="position:absolute;left:0px;top:1003px;width:1920px;height:1px;background:#c8c8c8"></div>
<svg style="position:absolute;left:28px;top:984px;" width="6" height="9" viewBox="0 0 6 9"><path d="M5.5 0 V9 L0 4.5 Z" fill="#b4b4b4"/></svg>
<svg style="position:absolute;left:57px;top:984px;" width="6" height="9" viewBox="0 0 6 9"><path d="M0.5 0 V9 L6 4.5 Z" fill="#b4b4b4"/></svg>
<div style="position:absolute;left:103px;top:974px;width:266px;height:26px;background:#fff;border-left:1px solid #ababab;border-right:1px solid #ababab;box-sizing:border-box"></div>
<div style="position:absolute;left:103px;top:997.5px;width:266px;height:2.5px;background:#217346"></div>
<div class="t" style="left:115.60px;top:975.81px;font-size:17px;color:#217346;font-weight:bold;transform:scaleX(0.9867);">Project Management Task List</div>
<div class="t" style="left:386.00px;top:976.81px;font-size:17px;color:#444;transform:scaleX(0.9676);">PM Task List Setup</div>
<div style="position:absolute;left:543px;top:978px;width:1px;height:21px;background:#999"></div>
<svg style="position:absolute;left:577px;top:979px;" width="20" height="20" viewBox="0 0 20 20"><circle cx="10" cy="10" r="9.3" fill="none" stroke="#666" stroke-width="1.2"/><path d="M10 4.5 V15.5 M4.5 10 H15.5" stroke="#666" stroke-width="1.6"/></svg>
<div style="position:absolute;left:1149px;top:981px;width:3px;height:3px;background:#b4b4b4"></div>
<div style="position:absolute;left:1149px;top:986px;width:3px;height:3px;background:#b4b4b4"></div>
<div style="position:absolute;left:1149px;top:991px;width:3px;height:3px;background:#b4b4b4"></div>
<div style="position:absolute;left:1167px;top:979px;width:19px;height:19px;background:#fff;border:1px solid #ababab;box-sizing:border-box"></div>
<svg style="position:absolute;left:1173px;top:984px;" width="6" height="9" viewBox="0 0 6 9"><path d="M5.5 0 V9 L0 4.5 Z" fill="#555"/></svg>
<div style="position:absolute;left:1185px;top:979px;width:659px;height:19px;background:#fff;border:1px solid #ababab;box-sizing:border-box"></div>
<div style="position:absolute;left:1844px;top:979px;width:32px;height:19px;background:#dadada"></div>
<div style="position:absolute;left:1876px;top:979px;width:19px;height:19px;background:#fff;border:1px solid #ababab;box-sizing:border-box"></div>
<svg style="position:absolute;left:1883px;top:984px;" width="6" height="9" viewBox="0 0 6 9"><path d="M0.5 0 V9 L6 4.5 Z" fill="#555"/></svg>
<div style="position:absolute;left:0px;top:1004px;width:1920px;height:26px;background:#f3f2f1"></div>
<div class="t" style="left:9.90px;top:1011.17px;font-size:13.5px;color:#444;transform:scaleX(0.8969);">Ready</div>
<div style="position:absolute;left:1555px;top:1004px;width:50px;height:26px;background:#dcdcdc"></div>
<svg style="position:absolute;left:1571px;top:1008px;" width="17" height="16" viewBox="0 0 17 16"><path d="M0.5 0.5 H16.5 V15.5 H0.5 Z M0.5 5.5 H16.5 M0.5 10.5 H16.5 M5.8 0.5 V15.5 M11.2 0.5 V15.5" fill="none" stroke="#555" stroke-width="1.1"/></svg>
<svg style="position:absolute;left:1621px;top:1008px;" width="18" height="16" viewBox="0 0 18 16"><rect x="0.5" y="0.5" width="17" height="15" fill="none" stroke="#555" stroke-width="1.1"/><rect x="3.5" y="3" width="11" height="10" fill="none" stroke="#555" stroke-width="1"/><path d="M5.5 6 H12.5 M5.5 8.5 H12.5 M5.5 11 H12.5" stroke="#555" stroke-width="0.9"/></svg>
<svg style="position:absolute;left:1671px;top:1008px;" width="18" height="16" viewBox="0 0 18 16"><path d="M0.5 15.5 V0.5 H17.5 V15.5 M6.5 0.5 V8.5 H11.5 V0.5" fill="none" stroke="#555" stroke-width="1.3"/></svg>
<div style="position:absolute;left:1712px;top:1016px;width:10px;height:1.2px;background:#555"></div>
<div style="position:absolute;left:1728px;top:1016px;width:125px;height:1px;background:#999"></div>
<div style="position:absolute;left:1789px;top:1013px;width:1px;height:7px;background:#999"></div>
<div style="position:absolute;left:1781px;top:1010px;width:6px;height:14px;background:#666"></div>
<div style="position:absolute;left:1859px;top:1016px;width:10px;height:1.2px;background:#555"></div>
<div style="position:absolute;left:1863.4px;top:1011.5px;width:1.2px;height:10px;background:#555"></div>
<div class="t" style="left:1885.00px;top:1010.57px;font-size:13.5px;color:#444;transform:scaleX(0.8882);">90%</div>
</body></html>
